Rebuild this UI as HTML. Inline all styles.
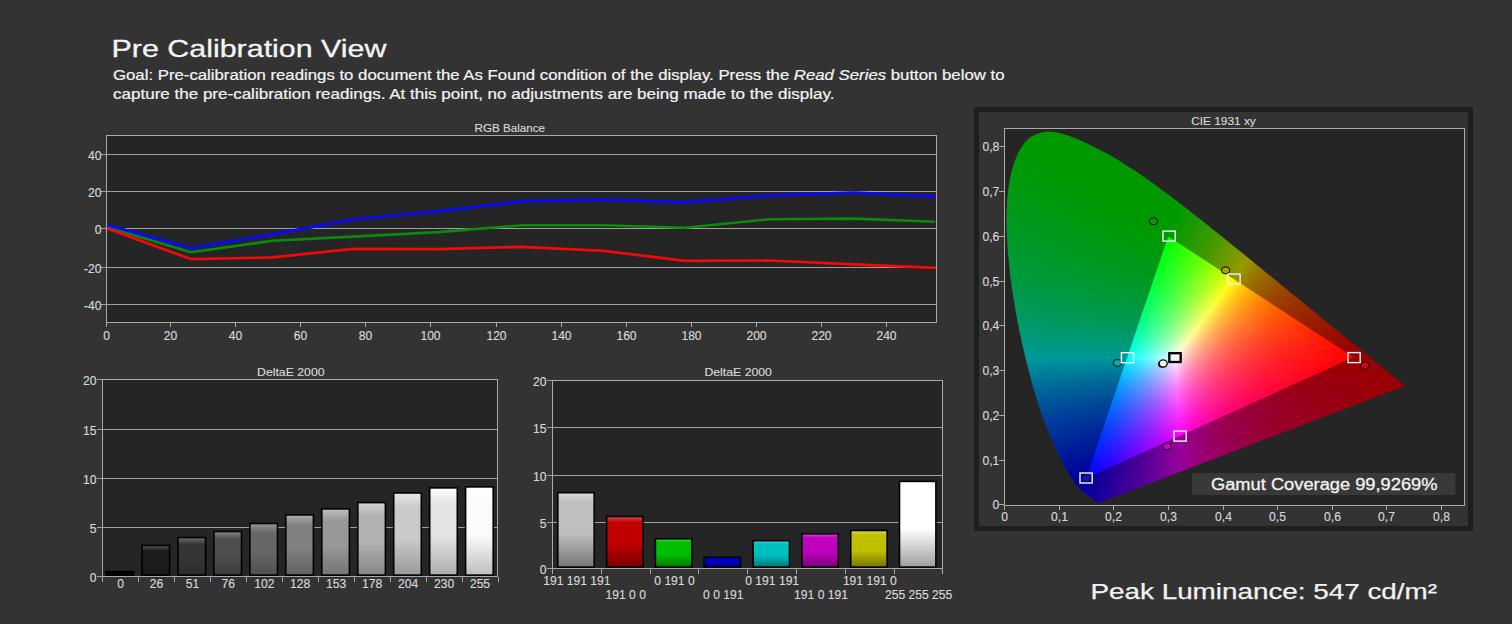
<!DOCTYPE html>
<html><head><meta charset="utf-8"><style>
html,body{margin:0;padding:0;background:#333333;width:1512px;height:624px;overflow:hidden;}
svg text{font-family:"Liberation Sans", sans-serif;}
.ax{font-size:12.1px;fill:#d8d8d8;stroke:#d8d8d8;stroke-width:0.15px;}
.tt{font-size:11.3px;fill:#d8d8d8;stroke:#d8d8d8;stroke-width:0.15px;}
.gam{font-size:15.8px;fill:#f2f2f2;stroke:#f2f2f2;stroke-width:0.3px;}
.title{font-size:24.8px;fill:#f4f4f4;stroke:#f4f4f4;stroke-width:0.3px;}
.goal{font-size:14.5px;fill:#f2f2f2;stroke:#f2f2f2;stroke-width:0.22px;}
.peak{font-size:22px;fill:#f2f2f2;stroke:#f2f2f2;stroke-width:0.25px;}
</style></head><body>
<svg width="1512" height="624" style="position:absolute;left:0;top:0"><defs><linearGradient id="gg0" x1="0" y1="0" x2="0" y2="1"><stop offset="0" stop-color="#464646"/><stop offset="0.18" stop-color="#040404"/><stop offset="0.55" stop-color="#040404"/><stop offset="1" stop-color="#060606"/></linearGradient><linearGradient id="gg1" x1="0" y1="0" x2="0" y2="1"><stop offset="0" stop-color="#5b5b5b"/><stop offset="0.18" stop-color="#1d1d1d"/><stop offset="0.55" stop-color="#1d1d1d"/><stop offset="1" stop-color="#191919"/></linearGradient><linearGradient id="gg2" x1="0" y1="0" x2="0" y2="1"><stop offset="0" stop-color="#6f6f6f"/><stop offset="0.18" stop-color="#353535"/><stop offset="0.55" stop-color="#353535"/><stop offset="1" stop-color="#2b2b2b"/></linearGradient><linearGradient id="gg3" x1="0" y1="0" x2="0" y2="1"><stop offset="0" stop-color="#838383"/><stop offset="0.18" stop-color="#4e4e4e"/><stop offset="0.55" stop-color="#4e4e4e"/><stop offset="1" stop-color="#3d3d3d"/></linearGradient><linearGradient id="gg4" x1="0" y1="0" x2="0" y2="1"><stop offset="0" stop-color="#989898"/><stop offset="0.18" stop-color="#676767"/><stop offset="0.55" stop-color="#676767"/><stop offset="1" stop-color="#4f4f4f"/></linearGradient><linearGradient id="gg5" x1="0" y1="0" x2="0" y2="1"><stop offset="0" stop-color="#acacac"/><stop offset="0.18" stop-color="#808080"/><stop offset="0.55" stop-color="#808080"/><stop offset="1" stop-color="#626262"/></linearGradient><linearGradient id="gg6" x1="0" y1="0" x2="0" y2="1"><stop offset="0" stop-color="#c0c0c0"/><stop offset="0.18" stop-color="#989898"/><stop offset="0.55" stop-color="#989898"/><stop offset="1" stop-color="#747474"/></linearGradient><linearGradient id="gg7" x1="0" y1="0" x2="0" y2="1"><stop offset="0" stop-color="#d4d4d4"/><stop offset="0.18" stop-color="#b1b1b1"/><stop offset="0.55" stop-color="#b1b1b1"/><stop offset="1" stop-color="#868686"/></linearGradient><linearGradient id="gg8" x1="0" y1="0" x2="0" y2="1"><stop offset="0" stop-color="#e9e9e9"/><stop offset="0.18" stop-color="#cacaca"/><stop offset="0.55" stop-color="#cacaca"/><stop offset="1" stop-color="#999999"/></linearGradient><linearGradient id="gg9" x1="0" y1="0" x2="0" y2="1"><stop offset="0" stop-color="#fefefe"/><stop offset="0.18" stop-color="#e3e3e3"/><stop offset="0.55" stop-color="#e3e3e3"/><stop offset="1" stop-color="#acacac"/></linearGradient><linearGradient id="gg10" x1="0" y1="0" x2="0" y2="1"><stop offset="0" stop-color="#ffffff"/><stop offset="0.18" stop-color="#fbfbfb"/><stop offset="0.55" stop-color="#fbfbfb"/><stop offset="1" stop-color="#bebebe"/></linearGradient><linearGradient id="cg0" x1="0" y1="0" x2="0" y2="1"><stop offset="0" stop-color="#dedede"/><stop offset="0.12" stop-color="#bfbfbf"/><stop offset="0.55" stop-color="#bfbfbf"/><stop offset="1" stop-color="#767676"/></linearGradient><linearGradient id="cg1" x1="0" y1="0" x2="0" y2="1"><stop offset="0" stop-color="#de4646"/><stop offset="0.12" stop-color="#bf0000"/><stop offset="0.55" stop-color="#bf0000"/><stop offset="1" stop-color="#760000"/></linearGradient><linearGradient id="cg2" x1="0" y1="0" x2="0" y2="1"><stop offset="0" stop-color="#46de46"/><stop offset="0.12" stop-color="#00bf00"/><stop offset="0.55" stop-color="#00bf00"/><stop offset="1" stop-color="#007600"/></linearGradient><linearGradient id="cg3" x1="0" y1="0" x2="0" y2="1"><stop offset="0" stop-color="#4646de"/><stop offset="0.12" stop-color="#0000bf"/><stop offset="0.55" stop-color="#0000bf"/><stop offset="1" stop-color="#000076"/></linearGradient><linearGradient id="cg4" x1="0" y1="0" x2="0" y2="1"><stop offset="0" stop-color="#46dede"/><stop offset="0.12" stop-color="#00bfbf"/><stop offset="0.55" stop-color="#00bfbf"/><stop offset="1" stop-color="#007676"/></linearGradient><linearGradient id="cg5" x1="0" y1="0" x2="0" y2="1"><stop offset="0" stop-color="#de46de"/><stop offset="0.12" stop-color="#bf00bf"/><stop offset="0.55" stop-color="#bf00bf"/><stop offset="1" stop-color="#760076"/></linearGradient><linearGradient id="cg6" x1="0" y1="0" x2="0" y2="1"><stop offset="0" stop-color="#dede46"/><stop offset="0.12" stop-color="#bfbf00"/><stop offset="0.55" stop-color="#bfbf00"/><stop offset="1" stop-color="#767600"/></linearGradient><linearGradient id="cg7" x1="0" y1="0" x2="0" y2="1"><stop offset="0" stop-color="#ffffff"/><stop offset="0.12" stop-color="#ffffff"/><stop offset="0.55" stop-color="#ffffff"/><stop offset="1" stop-color="#9e9e9e"/></linearGradient></defs><rect x="106" y="135" width="831" height="188" fill="#252525"/><rect x="106" y="135" width="831" height="1" fill="#aaaaaa"/><rect x="106" y="322" width="831" height="1" fill="#aaaaaa"/><rect x="106" y="135" width="1" height="188" fill="#aaaaaa"/><rect x="936" y="135" width="1" height="188" fill="#aaaaaa"/><rect x="101" y="154" width="835" height="1" fill="#a0a0a0"/><text x="101.5" y="159.8" class="ax" text-anchor="end">40</text><rect x="101" y="191" width="835" height="1" fill="#a0a0a0"/><text x="101.5" y="196.8" class="ax" text-anchor="end">20</text><rect x="101" y="228" width="835" height="1" fill="#a0a0a0"/><text x="101.5" y="233.8" class="ax" text-anchor="end">0</text><rect x="101" y="267" width="835" height="1" fill="#a0a0a0"/><text x="101.5" y="272.8" class="ax" text-anchor="end">-20</text><rect x="101" y="304" width="835" height="1" fill="#a0a0a0"/><text x="101.5" y="309.8" class="ax" text-anchor="end">-40</text><rect x="106" y="323" width="1" height="4" fill="#aaaaaa"/><text x="106.5" y="339.6" class="ax" text-anchor="middle">0</text><rect x="170" y="323" width="1" height="4" fill="#aaaaaa"/><text x="170.5" y="339.6" class="ax" text-anchor="middle">20</text><rect x="235" y="323" width="1" height="4" fill="#aaaaaa"/><text x="235.5" y="339.6" class="ax" text-anchor="middle">40</text><rect x="300" y="323" width="1" height="4" fill="#aaaaaa"/><text x="300.5" y="339.6" class="ax" text-anchor="middle">60</text><rect x="365" y="323" width="1" height="4" fill="#aaaaaa"/><text x="365.5" y="339.6" class="ax" text-anchor="middle">80</text><rect x="430" y="323" width="1" height="4" fill="#aaaaaa"/><text x="430.5" y="339.6" class="ax" text-anchor="middle">100</text><rect x="496" y="323" width="1" height="4" fill="#aaaaaa"/><text x="496.5" y="339.6" class="ax" text-anchor="middle">120</text><rect x="561" y="323" width="1" height="4" fill="#aaaaaa"/><text x="561.5" y="339.6" class="ax" text-anchor="middle">140</text><rect x="626" y="323" width="1" height="4" fill="#aaaaaa"/><text x="626.5" y="339.6" class="ax" text-anchor="middle">160</text><rect x="691" y="323" width="1" height="4" fill="#aaaaaa"/><text x="691.5" y="339.6" class="ax" text-anchor="middle">180</text><rect x="756" y="323" width="1" height="4" fill="#aaaaaa"/><text x="756.5" y="339.6" class="ax" text-anchor="middle">200</text><rect x="821" y="323" width="1" height="4" fill="#aaaaaa"/><text x="821.5" y="339.6" class="ax" text-anchor="middle">220</text><rect x="886" y="323" width="1" height="4" fill="#aaaaaa"/><text x="886.5" y="339.6" class="ax" text-anchor="middle">240</text><text x="509.8" y="131.7" class="tt" text-anchor="middle" textLength="70.5" lengthAdjust="spacingAndGlyphs">RGB Balance</text><svg x="107" y="136" width="829" height="186" overflow="hidden"><g transform="translate(-107 -136)"><polyline points="106.5,226.9 191.0,252.2 272.2,240.8 353.5,236.6 438.0,232.1 522.5,225.3 603.8,225.3 685.0,227.7 769.5,219.2 854.0,218.6 935.2,221.7" fill="none" stroke="#0b8a0b" stroke-width="2.6" stroke-linejoin="round"/><polyline points="106.5,228.3 191.0,259.1 272.2,257.4 353.5,248.8 438.0,249.1 522.5,246.8 603.8,250.9 685.0,260.8 769.5,260.5 854.0,264.3 935.2,267.8" fill="none" stroke="#f20a0a" stroke-width="2.7" stroke-linejoin="round"/><polyline points="106.5,224.9 191.0,248.0 272.2,234.5 353.5,219.4 438.0,211.3 522.5,201.2 603.8,199.5 685.0,202.2 769.5,195.5 854.0,192.6 935.2,196.5" fill="none" stroke="#0a0af5" stroke-width="2.9" stroke-linejoin="round"/></g></svg><rect x="102" y="379" width="396" height="198" fill="#252525"/><rect x="102" y="379" width="396" height="1" fill="#aaaaaa"/><rect x="102" y="576" width="396" height="1" fill="#aaaaaa"/><rect x="102" y="379" width="1" height="198" fill="#aaaaaa"/><rect x="497" y="379" width="1" height="198" fill="#aaaaaa"/><rect x="97" y="379" width="5" height="1" fill="#a0a0a0"/><text x="96.5" y="384.6" class="ax" text-anchor="end">20</text><rect x="97" y="429" width="400" height="1" fill="#a0a0a0"/><text x="96.5" y="434.6" class="ax" text-anchor="end">15</text><rect x="97" y="478" width="400" height="1" fill="#a0a0a0"/><text x="96.5" y="483.6" class="ax" text-anchor="end">10</text><rect x="97" y="527" width="400" height="1" fill="#a0a0a0"/><text x="96.5" y="532.6" class="ax" text-anchor="end">5</text><rect x="97" y="576" width="5" height="1" fill="#a0a0a0"/><text x="96.5" y="581.6" class="ax" text-anchor="end">0</text><rect x="102" y="577" width="1" height="5" fill="#aaaaaa"/><rect x="138" y="577" width="1" height="5" fill="#aaaaaa"/><rect x="174" y="577" width="1" height="5" fill="#aaaaaa"/><rect x="210" y="577" width="1" height="5" fill="#aaaaaa"/><rect x="246" y="577" width="1" height="5" fill="#aaaaaa"/><rect x="282" y="577" width="1" height="5" fill="#aaaaaa"/><rect x="318" y="577" width="1" height="5" fill="#aaaaaa"/><rect x="354" y="577" width="1" height="5" fill="#aaaaaa"/><rect x="390" y="577" width="1" height="5" fill="#aaaaaa"/><rect x="426" y="577" width="1" height="5" fill="#aaaaaa"/><rect x="462" y="577" width="1" height="5" fill="#aaaaaa"/><rect x="498" y="577" width="1" height="5" fill="#aaaaaa"/><rect x="106.1" y="571.6" width="27.6" height="3.5" fill="url(#gg0)" stroke="#000" stroke-width="1.6"/><text x="120.5" y="588" class="ax" text-anchor="middle">0</text><rect x="142.0" y="545.5" width="27.6" height="29.6" fill="url(#gg1)" stroke="#000" stroke-width="1.6"/><text x="156.4" y="588" class="ax" text-anchor="middle">26</text><rect x="178.0" y="537.5" width="27.6" height="37.6" fill="url(#gg2)" stroke="#000" stroke-width="1.6"/><text x="192.4" y="588" class="ax" text-anchor="middle">51</text><rect x="213.9" y="531.5" width="27.6" height="43.6" fill="url(#gg3)" stroke="#000" stroke-width="1.6"/><text x="228.3" y="588" class="ax" text-anchor="middle">76</text><rect x="249.9" y="523.5" width="27.6" height="51.6" fill="url(#gg4)" stroke="#000" stroke-width="1.6"/><text x="264.3" y="588" class="ax" text-anchor="middle">102</text><rect x="285.8" y="514.9" width="27.6" height="60.2" fill="url(#gg5)" stroke="#000" stroke-width="1.6"/><text x="300.2" y="588" class="ax" text-anchor="middle">128</text><rect x="321.8" y="508.9" width="27.6" height="66.2" fill="url(#gg6)" stroke="#000" stroke-width="1.6"/><text x="336.2" y="588" class="ax" text-anchor="middle">153</text><rect x="357.8" y="502.6" width="27.6" height="72.5" fill="url(#gg7)" stroke="#000" stroke-width="1.6"/><text x="372.2" y="588" class="ax" text-anchor="middle">178</text><rect x="393.7" y="493.0" width="27.6" height="82.1" fill="url(#gg8)" stroke="#000" stroke-width="1.6"/><text x="408.1" y="588" class="ax" text-anchor="middle">204</text><rect x="429.7" y="487.9" width="27.6" height="87.2" fill="url(#gg9)" stroke="#000" stroke-width="1.6"/><text x="444.1" y="588" class="ax" text-anchor="middle">230</text><rect x="465.6" y="486.9" width="27.6" height="88.2" fill="url(#gg10)" stroke="#000" stroke-width="1.6"/><text x="480.0" y="588" class="ax" text-anchor="middle">255</text><text x="290.8" y="375.9" class="tt" text-anchor="middle" textLength="67.5" lengthAdjust="spacingAndGlyphs">DeltaE 2000</text><rect x="552" y="380" width="391" height="189" fill="#252525"/><rect x="552" y="380" width="391" height="1" fill="#aaaaaa"/><rect x="552" y="568" width="391" height="1" fill="#aaaaaa"/><rect x="552" y="380" width="1" height="189" fill="#aaaaaa"/><rect x="942" y="380" width="1" height="189" fill="#aaaaaa"/><rect x="547" y="380" width="5" height="1" fill="#a0a0a0"/><text x="546.5" y="385.6" class="ax" text-anchor="end">20</text><rect x="547" y="427" width="395" height="1" fill="#a0a0a0"/><text x="546.5" y="432.6" class="ax" text-anchor="end">15</text><rect x="547" y="475" width="395" height="1" fill="#a0a0a0"/><text x="546.5" y="480.6" class="ax" text-anchor="end">10</text><rect x="547" y="522" width="395" height="1" fill="#a0a0a0"/><text x="546.5" y="527.6" class="ax" text-anchor="end">5</text><rect x="547" y="568" width="5" height="1" fill="#a0a0a0"/><text x="546.5" y="573.6" class="ax" text-anchor="end">0</text><rect x="552" y="569" width="1" height="5" fill="#aaaaaa"/><rect x="601" y="569" width="1" height="5" fill="#aaaaaa"/><rect x="650" y="569" width="1" height="5" fill="#aaaaaa"/><rect x="698" y="569" width="1" height="5" fill="#aaaaaa"/><rect x="747" y="569" width="1" height="5" fill="#aaaaaa"/><rect x="796" y="569" width="1" height="5" fill="#aaaaaa"/><rect x="845" y="569" width="1" height="5" fill="#aaaaaa"/><rect x="894" y="569" width="1" height="5" fill="#aaaaaa"/><rect x="942" y="569" width="1" height="5" fill="#aaaaaa"/><rect x="557.8" y="492.7" width="36.4" height="74.4" fill="url(#cg0)" stroke="#000" stroke-width="1.6"/><text x="576.9" y="585" class="ax" text-anchor="middle">191 191 191</text><rect x="606.6" y="516.5" width="36.4" height="50.6" fill="url(#cg1)" stroke="#000" stroke-width="1.6"/><text x="625.7" y="599" class="ax" text-anchor="middle">191 0 0</text><rect x="655.4" y="538.8" width="36.4" height="28.3" fill="url(#cg2)" stroke="#000" stroke-width="1.6"/><text x="674.5" y="585" class="ax" text-anchor="middle">0 191 0</text><rect x="704.2" y="557.2" width="36.4" height="9.9" fill="url(#cg3)" stroke="#000" stroke-width="1.6"/><text x="723.3" y="599" class="ax" text-anchor="middle">0 0 191</text><rect x="753.1" y="540.7" width="36.4" height="26.4" fill="url(#cg4)" stroke="#000" stroke-width="1.6"/><text x="772.2" y="585" class="ax" text-anchor="middle">0 191 191</text><rect x="801.9" y="533.8" width="36.4" height="33.3" fill="url(#cg5)" stroke="#000" stroke-width="1.6"/><text x="821.0" y="599" class="ax" text-anchor="middle">191 0 191</text><rect x="850.7" y="530.5" width="36.4" height="36.6" fill="url(#cg6)" stroke="#000" stroke-width="1.6"/><text x="869.8" y="585" class="ax" text-anchor="middle">191 191 0</text><rect x="899.5" y="481.4" width="36.4" height="85.7" fill="url(#cg7)" stroke="#000" stroke-width="1.6"/><text x="918.6" y="599" class="ax" text-anchor="middle">255 255 255</text><text x="738.2" y="375.9" class="tt" text-anchor="middle" textLength="67.5" lengthAdjust="spacingAndGlyphs">DeltaE 2000</text><rect x="976.5" y="109.5" width="494" height="419" fill="#333333" stroke="#1e1e1e" stroke-width="5"/><rect x="1004" y="128" width="461" height="378" fill="#252525"/><rect x="1004" y="128" width="461" height="1" fill="#aaaaaa"/><rect x="1004" y="505" width="461" height="1" fill="#aaaaaa"/><rect x="1004" y="128" width="1" height="378" fill="#aaaaaa"/><rect x="1464" y="128" width="1" height="378" fill="#aaaaaa"/><defs><linearGradient id="c0" x1="0" x2="1" y1="0" y2="0"><stop offset="0.022" stop-color="#009900"/><stop offset="0.978" stop-color="#009900"/></linearGradient><linearGradient id="c1" x1="0" x2="1" y1="0" y2="0"><stop offset="0.014" stop-color="#009900"/><stop offset="0.986" stop-color="#009900"/></linearGradient><linearGradient id="c2" x1="0" x2="1" y1="0" y2="0"><stop offset="0.011" stop-color="#009900"/><stop offset="0.989" stop-color="#009900"/></linearGradient><linearGradient id="c3" x1="0" x2="1" y1="0" y2="0"><stop offset="0.009" stop-color="#009900"/><stop offset="0.991" stop-color="#009900"/></linearGradient><linearGradient id="c4" x1="0" x2="1" y1="0" y2="0"><stop offset="0.008" stop-color="#009900"/><stop offset="0.992" stop-color="#009900"/></linearGradient><linearGradient id="c5" x1="0" x2="1" y1="0" y2="0"><stop offset="0.008" stop-color="#009900"/><stop offset="0.992" stop-color="#009900"/></linearGradient><linearGradient id="c6" x1="0" x2="1" y1="0" y2="0"><stop offset="0.007" stop-color="#009901"/><stop offset="0.993" stop-color="#009900"/></linearGradient><linearGradient id="c7" x1="0" x2="1" y1="0" y2="0"><stop offset="0.006" stop-color="#009902"/><stop offset="0.994" stop-color="#009900"/></linearGradient><linearGradient id="c8" x1="0" x2="1" y1="0" y2="0"><stop offset="0.006" stop-color="#009902"/><stop offset="0.994" stop-color="#009900"/></linearGradient><linearGradient id="c9" x1="0" x2="1" y1="0" y2="0"><stop offset="0.006" stop-color="#009903"/><stop offset="0.994" stop-color="#009900"/></linearGradient><linearGradient id="c10" x1="0" x2="1" y1="0" y2="0"><stop offset="0.005" stop-color="#009904"/><stop offset="0.995" stop-color="#009900"/></linearGradient><linearGradient id="c11" x1="0" x2="1" y1="0" y2="0"><stop offset="0.005" stop-color="#009905"/><stop offset="0.266" stop-color="#009900"/><stop offset="0.995" stop-color="#009900"/></linearGradient><linearGradient id="c12" x1="0" x2="1" y1="0" y2="0"><stop offset="0.005" stop-color="#009906"/><stop offset="0.295" stop-color="#009900"/><stop offset="0.995" stop-color="#009900"/></linearGradient><linearGradient id="c13" x1="0" x2="1" y1="0" y2="0"><stop offset="0.005" stop-color="#009906"/><stop offset="0.319" stop-color="#009900"/><stop offset="0.995" stop-color="#009900"/></linearGradient><linearGradient id="c14" x1="0" x2="1" y1="0" y2="0"><stop offset="0.005" stop-color="#009907"/><stop offset="0.353" stop-color="#009900"/><stop offset="0.995" stop-color="#009900"/></linearGradient><linearGradient id="c15" x1="0" x2="1" y1="0" y2="0"><stop offset="0.004" stop-color="#009908"/><stop offset="0.371" stop-color="#009900"/><stop offset="0.996" stop-color="#009900"/></linearGradient><linearGradient id="c16" x1="0" x2="1" y1="0" y2="0"><stop offset="0.004" stop-color="#009909"/><stop offset="0.389" stop-color="#009900"/><stop offset="0.996" stop-color="#009900"/></linearGradient><linearGradient id="c17" x1="0" x2="1" y1="0" y2="0"><stop offset="0.004" stop-color="#00990a"/><stop offset="0.409" stop-color="#009900"/><stop offset="0.996" stop-color="#009900"/></linearGradient><linearGradient id="c18" x1="0" x2="1" y1="0" y2="0"><stop offset="0.004" stop-color="#00990a"/><stop offset="0.423" stop-color="#009900"/><stop offset="0.996" stop-color="#009900"/></linearGradient><linearGradient id="c19" x1="0" x2="1" y1="0" y2="0"><stop offset="0.004" stop-color="#00990b"/><stop offset="0.441" stop-color="#009900"/><stop offset="0.996" stop-color="#009900"/></linearGradient><linearGradient id="c20" x1="0" x2="1" y1="0" y2="0"><stop offset="0.004" stop-color="#00990c"/><stop offset="0.454" stop-color="#009900"/><stop offset="0.996" stop-color="#009900"/></linearGradient><linearGradient id="c21" x1="0" x2="1" y1="0" y2="0"><stop offset="0.004" stop-color="#00990d"/><stop offset="0.470" stop-color="#009900"/><stop offset="0.996" stop-color="#009900"/></linearGradient><linearGradient id="c22" x1="0" x2="1" y1="0" y2="0"><stop offset="0.004" stop-color="#00990d"/><stop offset="0.482" stop-color="#009900"/><stop offset="0.996" stop-color="#009900"/></linearGradient><linearGradient id="c23" x1="0" x2="1" y1="0" y2="0"><stop offset="0.004" stop-color="#00990e"/><stop offset="0.500" stop-color="#009900"/><stop offset="0.996" stop-color="#009900"/></linearGradient><linearGradient id="c24" x1="0" x2="1" y1="0" y2="0"><stop offset="0.003" stop-color="#00990f"/><stop offset="0.510" stop-color="#009900"/><stop offset="0.997" stop-color="#009900"/></linearGradient><linearGradient id="c25" x1="0" x2="1" y1="0" y2="0"><stop offset="0.003" stop-color="#009910"/><stop offset="0.520" stop-color="#009900"/><stop offset="0.997" stop-color="#009900"/></linearGradient><linearGradient id="c26" x1="0" x2="1" y1="0" y2="0"><stop offset="0.003" stop-color="#009911"/><stop offset="0.533" stop-color="#009900"/><stop offset="0.997" stop-color="#009900"/></linearGradient><linearGradient id="c27" x1="0" x2="1" y1="0" y2="0"><stop offset="0.003" stop-color="#009911"/><stop offset="0.542" stop-color="#009900"/><stop offset="0.997" stop-color="#009900"/></linearGradient><linearGradient id="c28" x1="0" x2="1" y1="0" y2="0"><stop offset="0.003" stop-color="#009912"/><stop offset="0.554" stop-color="#009900"/><stop offset="0.997" stop-color="#009900"/></linearGradient><linearGradient id="c29" x1="0" x2="1" y1="0" y2="0"><stop offset="0.003" stop-color="#009913"/><stop offset="0.563" stop-color="#009900"/><stop offset="0.997" stop-color="#009900"/></linearGradient><linearGradient id="c30" x1="0" x2="1" y1="0" y2="0"><stop offset="0.003" stop-color="#009914"/><stop offset="0.574" stop-color="#009900"/><stop offset="0.997" stop-color="#009900"/></linearGradient><linearGradient id="c31" x1="0" x2="1" y1="0" y2="0"><stop offset="0.003" stop-color="#009915"/><stop offset="0.591" stop-color="#009900"/><stop offset="0.997" stop-color="#009900"/></linearGradient><linearGradient id="c32" x1="0" x2="1" y1="0" y2="0"><stop offset="0.003" stop-color="#009915"/><stop offset="0.598" stop-color="#009900"/><stop offset="0.997" stop-color="#009900"/></linearGradient><linearGradient id="c33" x1="0" x2="1" y1="0" y2="0"><stop offset="0.003" stop-color="#009916"/><stop offset="0.605" stop-color="#009900"/><stop offset="0.997" stop-color="#009900"/></linearGradient><linearGradient id="c34" x1="0" x2="1" y1="0" y2="0"><stop offset="0.003" stop-color="#009917"/><stop offset="0.616" stop-color="#009900"/><stop offset="0.997" stop-color="#009900"/></linearGradient><linearGradient id="c35" x1="0" x2="1" y1="0" y2="0"><stop offset="0.003" stop-color="#009918"/><stop offset="0.622" stop-color="#009900"/><stop offset="0.997" stop-color="#029900"/></linearGradient><linearGradient id="c36" x1="0" x2="1" y1="0" y2="0"><stop offset="0.003" stop-color="#009919"/><stop offset="0.634" stop-color="#009900"/><stop offset="0.969" stop-color="#009900"/><stop offset="0.997" stop-color="#059900"/></linearGradient><linearGradient id="c37" x1="0" x2="1" y1="0" y2="0"><stop offset="0.003" stop-color="#00991a"/><stop offset="0.640" stop-color="#009900"/><stop offset="0.953" stop-color="#009900"/><stop offset="0.997" stop-color="#099900"/></linearGradient><linearGradient id="c38" x1="0" x2="1" y1="0" y2="0"><stop offset="0.003" stop-color="#00991b"/><stop offset="0.646" stop-color="#009900"/><stop offset="0.932" stop-color="#009900"/><stop offset="0.997" stop-color="#0d9900"/></linearGradient><linearGradient id="c39" x1="0" x2="1" y1="0" y2="0"><stop offset="0.003" stop-color="#00991b"/><stop offset="0.655" stop-color="#009900"/><stop offset="0.917" stop-color="#009900"/><stop offset="0.997" stop-color="#119900"/></linearGradient><linearGradient id="c40" x1="0" x2="1" y1="0" y2="0"><stop offset="0.003" stop-color="#00991c"/><stop offset="0.661" stop-color="#009900"/><stop offset="0.903" stop-color="#009900"/><stop offset="0.997" stop-color="#159900"/></linearGradient><linearGradient id="c41" x1="0" x2="1" y1="0" y2="0"><stop offset="0.003" stop-color="#00991d"/><stop offset="0.669" stop-color="#009900"/><stop offset="0.888" stop-color="#009900"/><stop offset="0.997" stop-color="#199900"/></linearGradient><linearGradient id="c42" x1="0" x2="1" y1="0" y2="0"><stop offset="0.003" stop-color="#00991e"/><stop offset="0.674" stop-color="#009900"/><stop offset="0.869" stop-color="#009900"/><stop offset="0.997" stop-color="#1e9900"/></linearGradient><linearGradient id="c43" x1="0" x2="1" y1="0" y2="0"><stop offset="0.003" stop-color="#00991f"/><stop offset="0.683" stop-color="#009900"/><stop offset="0.860" stop-color="#009900"/><stop offset="0.997" stop-color="#219900"/></linearGradient><linearGradient id="c44" x1="0" x2="1" y1="0" y2="0"><stop offset="0.003" stop-color="#009920"/><stop offset="0.688" stop-color="#009900"/><stop offset="0.843" stop-color="#009900"/><stop offset="0.998" stop-color="#269900"/></linearGradient><linearGradient id="c45" x1="0" x2="1" y1="0" y2="0"><stop offset="0.002" stop-color="#009921"/><stop offset="0.696" stop-color="#009900"/><stop offset="0.829" stop-color="#009900"/><stop offset="0.998" stop-color="#2a9900"/></linearGradient><linearGradient id="c46" x1="0" x2="1" y1="0" y2="0"><stop offset="0.002" stop-color="#009922"/><stop offset="0.700" stop-color="#009900"/><stop offset="0.817" stop-color="#009900"/><stop offset="0.998" stop-color="#309900"/></linearGradient><linearGradient id="c47" x1="0" x2="1" y1="0" y2="0"><stop offset="0.002" stop-color="#009923"/><stop offset="0.708" stop-color="#009900"/><stop offset="0.804" stop-color="#009900"/><stop offset="0.998" stop-color="#349900"/></linearGradient><linearGradient id="c48" x1="0" x2="1" y1="0" y2="0"><stop offset="0.002" stop-color="#009924"/><stop offset="0.788" stop-color="#009900"/><stop offset="0.998" stop-color="#3a9900"/></linearGradient><linearGradient id="c49" x1="0" x2="1" y1="0" y2="0"><stop offset="0.002" stop-color="#009925"/><stop offset="0.781" stop-color="#009900"/><stop offset="0.998" stop-color="#3e9900"/></linearGradient><linearGradient id="c50" x1="0" x2="1" y1="0" y2="0"><stop offset="0.002" stop-color="#009926"/><stop offset="0.765" stop-color="#009900"/><stop offset="0.998" stop-color="#459900"/></linearGradient><linearGradient id="c51" x1="0" x2="1" y1="0" y2="0"><stop offset="0.002" stop-color="#009927"/><stop offset="0.753" stop-color="#009900"/><stop offset="0.998" stop-color="#499900"/></linearGradient><linearGradient id="c52" x1="0" x2="1" y1="0" y2="0"><stop offset="0.002" stop-color="#009928"/><stop offset="0.743" stop-color="#009900"/><stop offset="0.998" stop-color="#509900"/></linearGradient><linearGradient id="c53" x1="0" x2="1" y1="0" y2="0"><stop offset="0.083" stop-color="#00ff01"/><stop offset="0.917" stop-color="#07ff00"/></linearGradient><linearGradient id="c54" x1="0" x2="1" y1="0" y2="0"><stop offset="0.002" stop-color="#009929"/><stop offset="0.732" stop-color="#009901"/><stop offset="0.998" stop-color="#559900"/></linearGradient><linearGradient id="c55" x1="0" x2="1" y1="0" y2="0"><stop offset="0.056" stop-color="#00ff02"/><stop offset="0.944" stop-color="#0fff00"/></linearGradient><linearGradient id="c56" x1="0" x2="1" y1="0" y2="0"><stop offset="0.002" stop-color="#00992a"/><stop offset="0.717" stop-color="#009902"/><stop offset="0.855" stop-color="#2a9900"/><stop offset="0.998" stop-color="#5c9900"/></linearGradient><linearGradient id="c57" x1="0" x2="1" y1="0" y2="0"><stop offset="0.038" stop-color="#00ff05"/><stop offset="0.962" stop-color="#17ff00"/></linearGradient><linearGradient id="c58" x1="0" x2="1" y1="0" y2="0"><stop offset="0.002" stop-color="#00992b"/><stop offset="0.710" stop-color="#009904"/><stop offset="0.861" stop-color="#2f9900"/><stop offset="0.998" stop-color="#629900"/></linearGradient><linearGradient id="c59" x1="0" x2="1" y1="0" y2="0"><stop offset="0.029" stop-color="#00ff07"/><stop offset="0.971" stop-color="#1fff00"/></linearGradient><linearGradient id="c60" x1="0" x2="1" y1="0" y2="0"><stop offset="0.002" stop-color="#00992c"/><stop offset="0.697" stop-color="#009905"/><stop offset="0.854" stop-color="#329900"/><stop offset="0.998" stop-color="#699900"/></linearGradient><linearGradient id="c61" x1="0" x2="1" y1="0" y2="0"><stop offset="0.025" stop-color="#00ff09"/><stop offset="0.975" stop-color="#28ff00"/></linearGradient><linearGradient id="c62" x1="0" x2="1" y1="0" y2="0"><stop offset="0.002" stop-color="#00992d"/><stop offset="0.686" stop-color="#009906"/><stop offset="0.846" stop-color="#349900"/><stop offset="0.998" stop-color="#6f9900"/></linearGradient><linearGradient id="c63" x1="0" x2="1" y1="0" y2="0"><stop offset="0.021" stop-color="#00ff0b"/><stop offset="0.979" stop-color="#31ff00"/></linearGradient><linearGradient id="c64" x1="0" x2="1" y1="0" y2="0"><stop offset="0.002" stop-color="#00992e"/><stop offset="0.677" stop-color="#009908"/><stop offset="0.844" stop-color="#399900"/><stop offset="0.998" stop-color="#789900"/></linearGradient><linearGradient id="c65" x1="0" x2="1" y1="0" y2="0"><stop offset="0.018" stop-color="#00ff0e"/><stop offset="0.089" stop-color="#01ff0d"/><stop offset="0.982" stop-color="#3bff00"/></linearGradient><linearGradient id="c66" x1="0" x2="1" y1="0" y2="0"><stop offset="0.002" stop-color="#00992f"/><stop offset="0.667" stop-color="#009909"/><stop offset="0.841" stop-color="#3c9900"/><stop offset="0.998" stop-color="#7e9900"/></linearGradient><linearGradient id="c67" x1="0" x2="1" y1="0" y2="0"><stop offset="0.016" stop-color="#00ff10"/><stop offset="0.984" stop-color="#44ff00"/></linearGradient><linearGradient id="c68" x1="0" x2="1" y1="0" y2="0"><stop offset="0.002" stop-color="#009930"/><stop offset="0.655" stop-color="#00990b"/><stop offset="0.831" stop-color="#3e9900"/><stop offset="0.998" stop-color="#879900"/></linearGradient><linearGradient id="c69" x1="0" x2="1" y1="0" y2="0"><stop offset="0.014" stop-color="#00ff12"/><stop offset="0.271" stop-color="#11ff0d"/><stop offset="0.986" stop-color="#4fff00"/></linearGradient><linearGradient id="c70" x1="0" x2="1" y1="0" y2="0"><stop offset="0.002" stop-color="#009932"/><stop offset="0.649" stop-color="#00990c"/><stop offset="0.832" stop-color="#439900"/><stop offset="0.998" stop-color="#8e9900"/></linearGradient><linearGradient id="c71" x1="0" x2="1" y1="0" y2="0"><stop offset="0.013" stop-color="#00ff15"/><stop offset="0.295" stop-color="#15ff0f"/><stop offset="0.987" stop-color="#59ff00"/></linearGradient><linearGradient id="c72" x1="0" x2="1" y1="0" y2="0"><stop offset="0.002" stop-color="#009933"/><stop offset="0.636" stop-color="#00990d"/><stop offset="0.829" stop-color="#489900"/><stop offset="0.998" stop-color="#989900"/></linearGradient><linearGradient id="c73" x1="0" x2="1" y1="0" y2="0"><stop offset="0.012" stop-color="#00ff17"/><stop offset="0.393" stop-color="#23ff0e"/><stop offset="0.988" stop-color="#64ff00"/></linearGradient><linearGradient id="c74" x1="0" x2="1" y1="0" y2="0"><stop offset="0.002" stop-color="#009934"/><stop offset="0.627" stop-color="#00990f"/><stop offset="0.794" stop-color="#3e9900"/><stop offset="0.986" stop-color="#999900"/><stop offset="0.998" stop-color="#999300"/></linearGradient><linearGradient id="c75" x1="0" x2="1" y1="0" y2="0"><stop offset="0.011" stop-color="#00ff1a"/><stop offset="0.402" stop-color="#28ff0f"/><stop offset="0.989" stop-color="#70ff00"/></linearGradient><linearGradient id="c76" x1="0" x2="1" y1="0" y2="0"><stop offset="0.002" stop-color="#009935"/><stop offset="0.619" stop-color="#009910"/><stop offset="0.804" stop-color="#489900"/><stop offset="0.966" stop-color="#979900"/><stop offset="0.998" stop-color="#998a00"/></linearGradient><linearGradient id="c77" x1="0" x2="1" y1="0" y2="0"><stop offset="0.010" stop-color="#00ff1c"/><stop offset="0.050" stop-color="#01ff1b"/><stop offset="0.390" stop-color="#2aff11"/><stop offset="0.990" stop-color="#7bff00"/></linearGradient><linearGradient id="c78" x1="0" x2="1" y1="0" y2="0"><stop offset="0.002" stop-color="#009936"/><stop offset="0.610" stop-color="#009912"/><stop offset="0.794" stop-color="#489901"/><stop offset="0.954" stop-color="#999900"/><stop offset="0.998" stop-color="#998300"/></linearGradient><linearGradient id="c79" x1="0" x2="1" y1="0" y2="0"><stop offset="0.009" stop-color="#00ff1e"/><stop offset="0.462" stop-color="#39ff10"/><stop offset="0.991" stop-color="#88ff00"/></linearGradient><linearGradient id="c80" x1="0" x2="1" y1="0" y2="0"><stop offset="0.002" stop-color="#009938"/><stop offset="0.601" stop-color="#009914"/><stop offset="0.776" stop-color="#459903"/><stop offset="0.938" stop-color="#979900"/><stop offset="0.998" stop-color="#997d00"/></linearGradient><linearGradient id="c81" x1="0" x2="1" y1="0" y2="0"><stop offset="0.009" stop-color="#00ff21"/><stop offset="0.457" stop-color="#3eff12"/><stop offset="0.991" stop-color="#98ff00"/></linearGradient><linearGradient id="c82" x1="0" x2="1" y1="0" y2="0"><stop offset="0.002" stop-color="#009939"/><stop offset="0.593" stop-color="#009915"/><stop offset="0.766" stop-color="#479905"/><stop offset="0.923" stop-color="#989900"/><stop offset="0.998" stop-color="#997600"/></linearGradient><linearGradient id="c83" x1="0" x2="1" y1="0" y2="0"><stop offset="0.008" stop-color="#00ff24"/><stop offset="0.040" stop-color="#01ff23"/><stop offset="0.444" stop-color="#40ff14"/><stop offset="0.992" stop-color="#a5ff00"/></linearGradient><linearGradient id="c84" x1="0" x2="1" y1="0" y2="0"><stop offset="0.002" stop-color="#00993a"/><stop offset="0.584" stop-color="#009917"/><stop offset="0.756" stop-color="#479907"/><stop offset="0.814" stop-color="#649900"/><stop offset="0.908" stop-color="#979900"/><stop offset="0.998" stop-color="#997000"/></linearGradient><linearGradient id="c85" x1="0" x2="1" y1="0" y2="0"><stop offset="0.008" stop-color="#00ff26"/><stop offset="0.485" stop-color="#4eff14"/><stop offset="0.992" stop-color="#b4ff00"/></linearGradient><linearGradient id="c86" x1="0" x2="1" y1="0" y2="0"><stop offset="0.002" stop-color="#00993b"/><stop offset="0.573" stop-color="#009919"/><stop offset="0.739" stop-color="#469909"/><stop offset="0.817" stop-color="#6c9900"/><stop offset="0.894" stop-color="#989900"/><stop offset="0.998" stop-color="#996a00"/></linearGradient><linearGradient id="c87" x1="0" x2="1" y1="0" y2="0"><stop offset="0.007" stop-color="#00ff29"/><stop offset="0.152" stop-color="#15ff24"/><stop offset="0.486" stop-color="#53ff16"/><stop offset="0.993" stop-color="#c3ff00"/></linearGradient><linearGradient id="c88" x1="0" x2="1" y1="0" y2="0"><stop offset="0.002" stop-color="#00993d"/><stop offset="0.569" stop-color="#01991a"/><stop offset="0.734" stop-color="#48990a"/><stop offset="0.822" stop-color="#759900"/><stop offset="0.883" stop-color="#999900"/><stop offset="0.937" stop-color="#997c00"/><stop offset="0.998" stop-color="#996500"/></linearGradient><linearGradient id="c89" x1="0" x2="1" y1="0" y2="0"><stop offset="0.007" stop-color="#00ff2c"/><stop offset="0.144" stop-color="#15ff27"/><stop offset="0.486" stop-color="#59ff18"/><stop offset="0.993" stop-color="#d2ff00"/></linearGradient><linearGradient id="c90" x1="0" x2="1" y1="0" y2="0"><stop offset="0.002" stop-color="#00993e"/><stop offset="0.559" stop-color="#00991c"/><stop offset="0.722" stop-color="#48990c"/><stop offset="0.866" stop-color="#989900"/><stop offset="0.930" stop-color="#997800"/><stop offset="0.998" stop-color="#995f00"/></linearGradient><linearGradient id="c91" x1="0" x2="1" y1="0" y2="0"><stop offset="0.007" stop-color="#00ff2f"/><stop offset="0.204" stop-color="#24ff27"/><stop offset="0.507" stop-color="#65ff18"/><stop offset="0.757" stop-color="#a2ff0b"/><stop offset="0.993" stop-color="#e2ff00"/></linearGradient><linearGradient id="c92" x1="0" x2="1" y1="0" y2="0"><stop offset="0.002" stop-color="#00993f"/><stop offset="0.549" stop-color="#00991e"/><stop offset="0.708" stop-color="#46990f"/><stop offset="0.855" stop-color="#999900"/><stop offset="0.919" stop-color="#997700"/><stop offset="0.998" stop-color="#995b00"/></linearGradient><linearGradient id="c93" x1="0" x2="1" y1="0" y2="0"><stop offset="0.006" stop-color="#00ff32"/><stop offset="0.194" stop-color="#23ff2a"/><stop offset="0.506" stop-color="#6bff1a"/><stop offset="0.756" stop-color="#adff0c"/><stop offset="0.994" stop-color="#f4ff00"/></linearGradient><linearGradient id="c94" x1="0" x2="1" y1="0" y2="0"><stop offset="0.002" stop-color="#009941"/><stop offset="0.539" stop-color="#009920"/><stop offset="0.692" stop-color="#449911"/><stop offset="0.838" stop-color="#989900"/><stop offset="0.912" stop-color="#997300"/><stop offset="0.998" stop-color="#995500"/></linearGradient><linearGradient id="c95" x1="0" x2="1" y1="0" y2="0"><stop offset="0.006" stop-color="#00ff35"/><stop offset="0.149" stop-color="#1bff2f"/><stop offset="0.446" stop-color="#62ff20"/><stop offset="0.720" stop-color="#aeff10"/><stop offset="0.970" stop-color="#fdff00"/><stop offset="0.994" stop-color="#fff900"/></linearGradient><linearGradient id="c96" x1="0" x2="1" y1="0" y2="0"><stop offset="0.002" stop-color="#009942"/><stop offset="0.535" stop-color="#009921"/><stop offset="0.691" stop-color="#489912"/><stop offset="0.828" stop-color="#999901"/><stop offset="0.902" stop-color="#997200"/><stop offset="0.998" stop-color="#995100"/></linearGradient><linearGradient id="c97" x1="0" x2="1" y1="0" y2="0"><stop offset="0.006" stop-color="#00ff38"/><stop offset="0.201" stop-color="#2bff2f"/><stop offset="0.477" stop-color="#72ff20"/><stop offset="0.707" stop-color="#b6ff11"/><stop offset="0.925" stop-color="#ffff02"/><stop offset="0.994" stop-color="#ffe800"/></linearGradient><linearGradient id="c98" x1="0" x2="1" y1="0" y2="0"><stop offset="0.002" stop-color="#009944"/><stop offset="0.528" stop-color="#009923"/><stop offset="0.678" stop-color="#479915"/><stop offset="0.814" stop-color="#989904"/><stop offset="0.899" stop-color="#996e00"/><stop offset="0.998" stop-color="#994e00"/></linearGradient><linearGradient id="c99" x1="0" x2="1" y1="0" y2="0"><stop offset="0.005" stop-color="#00ff3b"/><stop offset="0.181" stop-color="#27ff33"/><stop offset="0.445" stop-color="#6fff24"/><stop offset="0.665" stop-color="#b3ff16"/><stop offset="0.874" stop-color="#fdff07"/><stop offset="0.995" stop-color="#ffd900"/></linearGradient><linearGradient id="c100" x1="0" x2="1" y1="0" y2="0"><stop offset="0.002" stop-color="#009945"/><stop offset="0.516" stop-color="#009925"/><stop offset="0.662" stop-color="#459917"/><stop offset="0.801" stop-color="#999906"/><stop offset="0.885" stop-color="#996c00"/><stop offset="0.998" stop-color="#994900"/></linearGradient><linearGradient id="c101" x1="0" x2="1" y1="0" y2="0"><stop offset="0.005" stop-color="#00ff3f"/><stop offset="0.026" stop-color="#01ff3e"/><stop offset="0.153" stop-color="#21ff37"/><stop offset="0.416" stop-color="#6cff28"/><stop offset="0.637" stop-color="#b4ff19"/><stop offset="0.837" stop-color="#ffff0a"/><stop offset="0.995" stop-color="#ffca00"/></linearGradient><linearGradient id="c102" x1="0" x2="1" y1="0" y2="0"><stop offset="0.002" stop-color="#009947"/><stop offset="0.513" stop-color="#009927"/><stop offset="0.658" stop-color="#479919"/><stop offset="0.792" stop-color="#999808"/><stop offset="0.882" stop-color="#996800"/><stop offset="0.998" stop-color="#994600"/></linearGradient><linearGradient id="c103" x1="0" x2="1" y1="0" y2="0"><stop offset="0.005" stop-color="#00ff42"/><stop offset="0.168" stop-color="#29ff39"/><stop offset="0.403" stop-color="#70ff2b"/><stop offset="0.607" stop-color="#b6ff1d"/><stop offset="0.791" stop-color="#fdff0f"/><stop offset="0.995" stop-color="#ffbd00"/></linearGradient><linearGradient id="c104" x1="0" x2="1" y1="0" y2="0"><stop offset="0.002" stop-color="#009948"/><stop offset="0.504" stop-color="#009929"/><stop offset="0.647" stop-color="#47991b"/><stop offset="0.776" stop-color="#99990b"/><stop offset="0.819" stop-color="#997f04"/><stop offset="0.869" stop-color="#996700"/><stop offset="0.998" stop-color="#994200"/></linearGradient><linearGradient id="c105" x1="0" x2="1" y1="0" y2="0"><stop offset="0.005" stop-color="#00ff45"/><stop offset="0.152" stop-color="#26ff3d"/><stop offset="0.387" stop-color="#70ff2f"/><stop offset="0.583" stop-color="#b7ff21"/><stop offset="0.760" stop-color="#ffff13"/><stop offset="0.868" stop-color="#ffd608"/><stop offset="0.995" stop-color="#ffb100"/></linearGradient><linearGradient id="c106" x1="0" x2="1" y1="0" y2="0"><stop offset="0.002" stop-color="#00994a"/><stop offset="0.495" stop-color="#00992b"/><stop offset="0.630" stop-color="#43991e"/><stop offset="0.766" stop-color="#99980e"/><stop offset="0.809" stop-color="#997d06"/><stop offset="0.863" stop-color="#996500"/><stop offset="0.998" stop-color="#993e00"/></linearGradient><linearGradient id="c107" x1="0" x2="1" y1="0" y2="0"><stop offset="0.005" stop-color="#00ff49"/><stop offset="0.024" stop-color="#01ff48"/><stop offset="0.127" stop-color="#20ff42"/><stop offset="0.363" stop-color="#6dff33"/><stop offset="0.552" stop-color="#b4ff25"/><stop offset="0.722" stop-color="#fdff18"/><stop offset="0.863" stop-color="#ffcb08"/><stop offset="0.995" stop-color="#ffa600"/></linearGradient><linearGradient id="c108" x1="0" x2="1" y1="0" y2="0"><stop offset="0.002" stop-color="#00994b"/><stop offset="0.489" stop-color="#00992d"/><stop offset="0.627" stop-color="#489920"/><stop offset="0.751" stop-color="#999911"/><stop offset="0.797" stop-color="#997c08"/><stop offset="0.853" stop-color="#996300"/><stop offset="0.998" stop-color="#993b00"/></linearGradient><linearGradient id="c109" x1="0" x2="1" y1="0" y2="0"><stop offset="0.005" stop-color="#00ff4c"/><stop offset="0.151" stop-color="#2bff43"/><stop offset="0.353" stop-color="#70ff36"/><stop offset="0.528" stop-color="#b5ff29"/><stop offset="0.693" stop-color="#ffff1c"/><stop offset="0.830" stop-color="#ffc90b"/><stop offset="0.995" stop-color="#ff9b00"/></linearGradient><linearGradient id="c110" x1="0" x2="1" y1="0" y2="0"><stop offset="0.002" stop-color="#00994d"/><stop offset="0.482" stop-color="#00992f"/><stop offset="0.616" stop-color="#469923"/><stop offset="0.742" stop-color="#999813"/><stop offset="0.791" stop-color="#997909"/><stop offset="0.847" stop-color="#996002"/><stop offset="0.998" stop-color="#993800"/></linearGradient><linearGradient id="c111" x1="0" x2="1" y1="0" y2="0"><stop offset="0.004" stop-color="#00ff50"/><stop offset="0.127" stop-color="#24ff48"/><stop offset="0.329" stop-color="#6dff3b"/><stop offset="0.487" stop-color="#aeff2f"/><stop offset="0.662" stop-color="#fffd1f"/><stop offset="0.811" stop-color="#ffc10d"/><stop offset="0.996" stop-color="#ff9000"/></linearGradient><linearGradient id="c112" x1="0" x2="1" y1="0" y2="0"><stop offset="0.002" stop-color="#00994f"/><stop offset="0.474" stop-color="#009932"/><stop offset="0.606" stop-color="#469925"/><stop offset="0.727" stop-color="#999916"/><stop offset="0.780" stop-color="#99780b"/><stop offset="0.839" stop-color="#995e03"/><stop offset="0.911" stop-color="#994700"/><stop offset="0.998" stop-color="#993400"/></linearGradient><linearGradient id="c113" x1="0" x2="1" y1="0" y2="0"><stop offset="0.004" stop-color="#00ff53"/><stop offset="0.021" stop-color="#01ff52"/><stop offset="0.114" stop-color="#21ff4d"/><stop offset="0.318" stop-color="#6dff3f"/><stop offset="0.479" stop-color="#b3ff32"/><stop offset="0.631" stop-color="#feff25"/><stop offset="0.708" stop-color="#ffdc19"/><stop offset="0.792" stop-color="#ffbc0f"/><stop offset="0.996" stop-color="#ff8700"/></linearGradient><linearGradient id="c114" x1="0" x2="1" y1="0" y2="0"><stop offset="0.002" stop-color="#009950"/><stop offset="0.469" stop-color="#009934"/><stop offset="0.600" stop-color="#489927"/><stop offset="0.715" stop-color="#979919"/><stop offset="0.773" stop-color="#99750d"/><stop offset="0.832" stop-color="#995b04"/><stop offset="0.908" stop-color="#994400"/><stop offset="0.998" stop-color="#993200"/></linearGradient><linearGradient id="c115" x1="0" x2="1" y1="0" y2="0"><stop offset="0.004" stop-color="#00ff57"/><stop offset="0.020" stop-color="#00ff56"/><stop offset="0.086" stop-color="#17ff52"/><stop offset="0.291" stop-color="#67ff44"/><stop offset="0.447" stop-color="#acff38"/><stop offset="0.611" stop-color="#fffd29"/><stop offset="0.693" stop-color="#ffd61c"/><stop offset="0.783" stop-color="#ffb510"/><stop offset="0.996" stop-color="#ff7e00"/></linearGradient><linearGradient id="c116" x1="0" x2="1" y1="0" y2="0"><stop offset="0.002" stop-color="#009952"/><stop offset="0.461" stop-color="#009936"/><stop offset="0.587" stop-color="#46992a"/><stop offset="0.704" stop-color="#98991c"/><stop offset="0.759" stop-color="#99760f"/><stop offset="0.824" stop-color="#995905"/><stop offset="0.902" stop-color="#994200"/><stop offset="0.998" stop-color="#992f00"/></linearGradient><linearGradient id="c117" x1="0" x2="1" y1="0" y2="0"><stop offset="0.004" stop-color="#00ff5b"/><stop offset="0.116" stop-color="#26ff54"/><stop offset="0.292" stop-color="#6eff47"/><stop offset="0.444" stop-color="#b5ff3b"/><stop offset="0.580" stop-color="#feff2e"/><stop offset="0.668" stop-color="#ffd41f"/><stop offset="0.764" stop-color="#ffb012"/><stop offset="0.876" stop-color="#ff9007"/><stop offset="0.996" stop-color="#ff7600"/></linearGradient><linearGradient id="c118" x1="0" x2="1" y1="0" y2="0"><stop offset="0.002" stop-color="#009954"/><stop offset="0.454" stop-color="#009939"/><stop offset="0.577" stop-color="#44992d"/><stop offset="0.692" stop-color="#97991f"/><stop offset="0.753" stop-color="#997311"/><stop offset="0.818" stop-color="#995706"/><stop offset="0.900" stop-color="#993f00"/><stop offset="0.998" stop-color="#992c00"/></linearGradient><linearGradient id="c119" x1="0" x2="1" y1="0" y2="0"><stop offset="0.004" stop-color="#00ff5f"/><stop offset="0.019" stop-color="#01ff5e"/><stop offset="0.097" stop-color="#1fff59"/><stop offset="0.275" stop-color="#6bff4c"/><stop offset="0.415" stop-color="#aeff41"/><stop offset="0.562" stop-color="#fffe33"/><stop offset="0.647" stop-color="#ffd223"/><stop offset="0.748" stop-color="#ffac14"/><stop offset="0.864" stop-color="#ff8b08"/><stop offset="0.996" stop-color="#ff6f00"/></linearGradient><linearGradient id="c120" x1="0" x2="1" y1="0" y2="0"><stop offset="0.002" stop-color="#009956"/><stop offset="0.449" stop-color="#00993b"/><stop offset="0.575" stop-color="#49992f"/><stop offset="0.683" stop-color="#989922"/><stop offset="0.741" stop-color="#997313"/><stop offset="0.808" stop-color="#995608"/><stop offset="0.876" stop-color="#994200"/><stop offset="0.998" stop-color="#992a00"/></linearGradient><linearGradient id="c121" x1="0" x2="1" y1="0" y2="0"><stop offset="0.004" stop-color="#00ff63"/><stop offset="0.019" stop-color="#01ff62"/><stop offset="0.086" stop-color="#1bff5e"/><stop offset="0.267" stop-color="#6bff50"/><stop offset="0.410" stop-color="#b4ff45"/><stop offset="0.538" stop-color="#feff38"/><stop offset="0.628" stop-color="#ffd026"/><stop offset="0.733" stop-color="#ffa717"/><stop offset="0.853" stop-color="#ff8509"/><stop offset="0.996" stop-color="#ff6800"/></linearGradient><linearGradient id="c122" x1="0" x2="1" y1="0" y2="0"><stop offset="0.002" stop-color="#009957"/><stop offset="0.441" stop-color="#00993d"/><stop offset="0.562" stop-color="#479932"/><stop offset="0.669" stop-color="#979925"/><stop offset="0.733" stop-color="#997015"/><stop offset="0.800" stop-color="#995309"/><stop offset="0.878" stop-color="#993d00"/><stop offset="0.998" stop-color="#992700"/></linearGradient><linearGradient id="c123" x1="0" x2="1" y1="0" y2="0"><stop offset="0.004" stop-color="#00ff67"/><stop offset="0.099" stop-color="#24ff60"/><stop offset="0.261" stop-color="#6fff54"/><stop offset="0.386" stop-color="#b1ff4a"/><stop offset="0.518" stop-color="#fffe3d"/><stop offset="0.607" stop-color="#ffce2a"/><stop offset="0.717" stop-color="#ffa319"/><stop offset="0.842" stop-color="#ff800b"/><stop offset="0.996" stop-color="#ff6100"/></linearGradient><linearGradient id="c124" x1="0" x2="1" y1="0" y2="0"><stop offset="0.002" stop-color="#009959"/><stop offset="0.435" stop-color="#009940"/><stop offset="0.552" stop-color="#459935"/><stop offset="0.662" stop-color="#989928"/><stop offset="0.722" stop-color="#997117"/><stop offset="0.795" stop-color="#99510a"/><stop offset="0.882" stop-color="#993900"/><stop offset="0.998" stop-color="#992500"/></linearGradient><linearGradient id="c125" x1="0" x2="1" y1="0" y2="0"><stop offset="0.004" stop-color="#00ff6b"/><stop offset="0.018" stop-color="#02ff6a"/><stop offset="0.082" stop-color="#1dff66"/><stop offset="0.246" stop-color="#6bff5a"/><stop offset="0.375" stop-color="#b2ff4f"/><stop offset="0.496" stop-color="#feff43"/><stop offset="0.596" stop-color="#ffc92c"/><stop offset="0.704" stop-color="#ff9f1b"/><stop offset="0.839" stop-color="#ff790b"/><stop offset="0.996" stop-color="#ff5b00"/></linearGradient><linearGradient id="c126" x1="0" x2="1" y1="0" y2="0"><stop offset="0.002" stop-color="#00995b"/><stop offset="0.429" stop-color="#009942"/><stop offset="0.545" stop-color="#479938"/><stop offset="0.647" stop-color="#97992c"/><stop offset="0.714" stop-color="#996e19"/><stop offset="0.786" stop-color="#994f0b"/><stop offset="0.886" stop-color="#993500"/><stop offset="0.998" stop-color="#992200"/></linearGradient><linearGradient id="c127" x1="0" x2="1" y1="0" y2="0"><stop offset="0.003" stop-color="#00ff6f"/><stop offset="0.017" stop-color="#01ff6e"/><stop offset="0.066" stop-color="#16ff6b"/><stop offset="0.233" stop-color="#68ff5f"/><stop offset="0.358" stop-color="#afff54"/><stop offset="0.483" stop-color="#fffe48"/><stop offset="0.580" stop-color="#ffc630"/><stop offset="0.691" stop-color="#ff9a1d"/><stop offset="0.830" stop-color="#ff740c"/><stop offset="0.997" stop-color="#ff5500"/></linearGradient><linearGradient id="c128" x1="0" x2="1" y1="0" y2="0"><stop offset="0.002" stop-color="#00995d"/><stop offset="0.423" stop-color="#009945"/><stop offset="0.538" stop-color="#47993a"/><stop offset="0.640" stop-color="#98992f"/><stop offset="0.702" stop-color="#996e1b"/><stop offset="0.778" stop-color="#994e0d"/><stop offset="0.890" stop-color="#993100"/><stop offset="0.998" stop-color="#992000"/></linearGradient><linearGradient id="c129" x1="0" x2="1" y1="0" y2="0"><stop offset="0.003" stop-color="#00ff73"/><stop offset="0.092" stop-color="#26ff6d"/><stop offset="0.235" stop-color="#6fff63"/><stop offset="0.350" stop-color="#b4ff59"/><stop offset="0.459" stop-color="#fdff4e"/><stop offset="0.561" stop-color="#ffc433"/><stop offset="0.677" stop-color="#ff961e"/><stop offset="0.820" stop-color="#ff700d"/><stop offset="0.997" stop-color="#ff4f00"/></linearGradient><linearGradient id="c130" x1="0" x2="1" y1="0" y2="0"><stop offset="0.002" stop-color="#00995f"/><stop offset="0.413" stop-color="#009948"/><stop offset="0.525" stop-color="#45993e"/><stop offset="0.629" stop-color="#999932"/><stop offset="0.691" stop-color="#996d1d"/><stop offset="0.770" stop-color="#994c0e"/><stop offset="0.891" stop-color="#992e00"/><stop offset="0.998" stop-color="#991e00"/></linearGradient><linearGradient id="c131" x1="0" x2="1" y1="0" y2="0"><stop offset="0.003" stop-color="#00ff78"/><stop offset="0.017" stop-color="#02ff77"/><stop offset="0.076" stop-color="#1eff73"/><stop offset="0.222" stop-color="#6cff68"/><stop offset="0.334" stop-color="#b1ff5e"/><stop offset="0.447" stop-color="#fffe53"/><stop offset="0.546" stop-color="#ffc237"/><stop offset="0.666" stop-color="#ff9220"/><stop offset="0.811" stop-color="#ff6b0e"/><stop offset="0.997" stop-color="#ff4a00"/></linearGradient><linearGradient id="c132" x1="0" x2="1" y1="0" y2="0"><stop offset="0.002" stop-color="#009961"/><stop offset="0.411" stop-color="#00994a"/><stop offset="0.521" stop-color="#489941"/><stop offset="0.619" stop-color="#989936"/><stop offset="0.683" stop-color="#996c20"/><stop offset="0.761" stop-color="#994b0f"/><stop offset="0.894" stop-color="#992b00"/><stop offset="0.998" stop-color="#991c00"/></linearGradient><linearGradient id="c133" x1="0" x2="1" y1="0" y2="0"><stop offset="0.003" stop-color="#00ff7d"/><stop offset="0.016" stop-color="#01ff7c"/><stop offset="0.055" stop-color="#14ff79"/><stop offset="0.203" stop-color="#65ff6e"/><stop offset="0.306" stop-color="#a5ff65"/><stop offset="0.435" stop-color="#fffc58"/><stop offset="0.532" stop-color="#ffc03b"/><stop offset="0.655" stop-color="#ff8e22"/><stop offset="0.810" stop-color="#ff650e"/><stop offset="0.997" stop-color="#ff4500"/></linearGradient><linearGradient id="c134" x1="0" x2="1" y1="0" y2="0"><stop offset="0.002" stop-color="#009963"/><stop offset="0.404" stop-color="#00994d"/><stop offset="0.513" stop-color="#489944"/><stop offset="0.609" stop-color="#999939"/><stop offset="0.674" stop-color="#996b22"/><stop offset="0.754" stop-color="#994911"/><stop offset="0.895" stop-color="#992800"/><stop offset="0.998" stop-color="#991a00"/></linearGradient><linearGradient id="c135" x1="0" x2="1" y1="0" y2="0"><stop offset="0.003" stop-color="#00ff81"/><stop offset="0.085" stop-color="#27ff7c"/><stop offset="0.212" stop-color="#70ff72"/><stop offset="0.313" stop-color="#b3ff69"/><stop offset="0.415" stop-color="#ffff5f"/><stop offset="0.465" stop-color="#ffdb4d"/><stop offset="0.516" stop-color="#ffbe3e"/><stop offset="0.642" stop-color="#ff8a24"/><stop offset="0.801" stop-color="#ff610f"/><stop offset="0.997" stop-color="#ff4000"/></linearGradient><linearGradient id="c136" x1="0" x2="1" y1="0" y2="0"><stop offset="0.002" stop-color="#009965"/><stop offset="0.396" stop-color="#009950"/><stop offset="0.502" stop-color="#469947"/><stop offset="0.598" stop-color="#98993d"/><stop offset="0.665" stop-color="#996924"/><stop offset="0.745" stop-color="#994712"/><stop offset="0.899" stop-color="#992500"/><stop offset="0.998" stop-color="#991800"/></linearGradient><linearGradient id="c137" x1="0" x2="1" y1="0" y2="0"><stop offset="0.003" stop-color="#00ff86"/><stop offset="0.015" stop-color="#02ff85"/><stop offset="0.065" stop-color="#1cff82"/><stop offset="0.194" stop-color="#69ff78"/><stop offset="0.287" stop-color="#a7ff70"/><stop offset="0.404" stop-color="#fffc64"/><stop offset="0.454" stop-color="#ffd851"/><stop offset="0.503" stop-color="#ffbc42"/><stop offset="0.633" stop-color="#ff8626"/><stop offset="0.793" stop-color="#ff5c10"/><stop offset="0.997" stop-color="#ff3b00"/></linearGradient><linearGradient id="c138" x1="0" x2="1" y1="0" y2="0"><stop offset="0.002" stop-color="#009967"/><stop offset="0.393" stop-color="#019953"/><stop offset="0.498" stop-color="#49994a"/><stop offset="0.591" stop-color="#999940"/><stop offset="0.654" stop-color="#996a27"/><stop offset="0.740" stop-color="#994513"/><stop offset="0.903" stop-color="#992200"/><stop offset="0.998" stop-color="#991600"/></linearGradient><linearGradient id="c139" x1="0" x2="1" y1="0" y2="0"><stop offset="0.003" stop-color="#00ff8b"/><stop offset="0.015" stop-color="#01ff8a"/><stop offset="0.057" stop-color="#18ff88"/><stop offset="0.189" stop-color="#69ff7e"/><stop offset="0.290" stop-color="#b1ff75"/><stop offset="0.386" stop-color="#ffff6b"/><stop offset="0.434" stop-color="#ffda57"/><stop offset="0.488" stop-color="#ffb946"/><stop offset="0.620" stop-color="#ff8228"/><stop offset="0.787" stop-color="#ff5710"/><stop offset="0.997" stop-color="#ff3600"/></linearGradient><linearGradient id="c140" x1="0" x2="1" y1="0" y2="0"><stop offset="0.002" stop-color="#00996a"/><stop offset="0.386" stop-color="#009956"/><stop offset="0.487" stop-color="#46994e"/><stop offset="0.579" stop-color="#979945"/><stop offset="0.645" stop-color="#996829"/><stop offset="0.730" stop-color="#994415"/><stop offset="0.809" stop-color="#993009"/><stop offset="0.904" stop-color="#992000"/><stop offset="0.998" stop-color="#991400"/></linearGradient><linearGradient id="c141" x1="0" x2="1" y1="0" y2="0"><stop offset="0.003" stop-color="#00ff90"/><stop offset="0.068" stop-color="#22ff8c"/><stop offset="0.179" stop-color="#69ff83"/><stop offset="0.268" stop-color="#a9ff7c"/><stop offset="0.374" stop-color="#fffc71"/><stop offset="0.421" stop-color="#ffd85c"/><stop offset="0.479" stop-color="#ffb448"/><stop offset="0.609" stop-color="#ff7e2a"/><stop offset="0.779" stop-color="#ff5311"/><stop offset="0.997" stop-color="#ff3200"/></linearGradient><linearGradient id="c142" x1="0" x2="1" y1="0" y2="0"><stop offset="0.002" stop-color="#00996c"/><stop offset="0.379" stop-color="#009959"/><stop offset="0.480" stop-color="#479951"/><stop offset="0.571" stop-color="#999948"/><stop offset="0.602" stop-color="#997e38"/><stop offset="0.637" stop-color="#99672b"/><stop offset="0.725" stop-color="#994216"/><stop offset="0.803" stop-color="#992e0a"/><stop offset="0.901" stop-color="#991e01"/><stop offset="0.998" stop-color="#991300"/></linearGradient><linearGradient id="c143" x1="0" x2="1" y1="0" y2="0"><stop offset="0.003" stop-color="#00ff95"/><stop offset="0.014" stop-color="#02ff94"/><stop offset="0.060" stop-color="#1dff91"/><stop offset="0.181" stop-color="#6dff89"/><stop offset="0.273" stop-color="#b4ff81"/><stop offset="0.359" stop-color="#ffff79"/><stop offset="0.405" stop-color="#ffd963"/><stop offset="0.463" stop-color="#ffb54d"/><stop offset="0.526" stop-color="#ff963c"/><stop offset="0.595" stop-color="#ff7c2c"/><stop offset="0.767" stop-color="#ff5013"/><stop offset="0.997" stop-color="#ff2e00"/></linearGradient><linearGradient id="c144" x1="0" x2="1" y1="0" y2="0"><stop offset="0.002" stop-color="#00996e"/><stop offset="0.375" stop-color="#01995c"/><stop offset="0.472" stop-color="#479955"/><stop offset="0.559" stop-color="#97994d"/><stop offset="0.628" stop-color="#99662d"/><stop offset="0.715" stop-color="#994117"/><stop offset="0.793" stop-color="#992d0b"/><stop offset="0.889" stop-color="#991d02"/><stop offset="0.998" stop-color="#991100"/></linearGradient><linearGradient id="c145" x1="0" x2="1" y1="0" y2="0"><stop offset="0.003" stop-color="#00ff9b"/><stop offset="0.014" stop-color="#01ff9a"/><stop offset="0.048" stop-color="#16ff98"/><stop offset="0.166" stop-color="#65ff8f"/><stop offset="0.250" stop-color="#a7ff89"/><stop offset="0.351" stop-color="#fffd7e"/><stop offset="0.402" stop-color="#ffd365"/><stop offset="0.458" stop-color="#ffb04f"/><stop offset="0.520" stop-color="#ff923d"/><stop offset="0.593" stop-color="#ff772d"/><stop offset="0.767" stop-color="#ff4b13"/><stop offset="0.997" stop-color="#ff2a00"/></linearGradient><linearGradient id="c146" x1="0" x2="1" y1="0" y2="0"><stop offset="0.002" stop-color="#009970"/><stop offset="0.368" stop-color="#009960"/><stop offset="0.464" stop-color="#479959"/><stop offset="0.551" stop-color="#999951"/><stop offset="0.582" stop-color="#997d3f"/><stop offset="0.620" stop-color="#996430"/><stop offset="0.710" stop-color="#993f18"/><stop offset="0.787" stop-color="#992c0c"/><stop offset="0.884" stop-color="#991c02"/><stop offset="0.998" stop-color="#990f00"/></linearGradient><linearGradient id="c147" x1="0" x2="1" y1="0" y2="0"><stop offset="0.003" stop-color="#00ffa0"/><stop offset="0.064" stop-color="#23ff9c"/><stop offset="0.169" stop-color="#6eff95"/><stop offset="0.251" stop-color="#b2ff8e"/><stop offset="0.334" stop-color="#ffff86"/><stop offset="0.384" stop-color="#ffd46c"/><stop offset="0.439" stop-color="#ffb055"/><stop offset="0.506" stop-color="#ff9041"/><stop offset="0.577" stop-color="#ff7530"/><stop offset="0.760" stop-color="#ff4814"/><stop offset="0.997" stop-color="#ff2600"/></linearGradient><linearGradient id="c148" x1="0" x2="1" y1="0" y2="0"><stop offset="0.002" stop-color="#009973"/><stop offset="0.362" stop-color="#009963"/><stop offset="0.454" stop-color="#45995d"/><stop offset="0.540" stop-color="#979955"/><stop offset="0.577" stop-color="#997940"/><stop offset="0.611" stop-color="#996332"/><stop offset="0.700" stop-color="#993e1a"/><stop offset="0.777" stop-color="#992b0e"/><stop offset="0.872" stop-color="#991b03"/><stop offset="0.998" stop-color="#990d00"/></linearGradient><linearGradient id="c149" x1="0" x2="1" y1="0" y2="0"><stop offset="0.003" stop-color="#00ffa6"/><stop offset="0.014" stop-color="#02ffa5"/><stop offset="0.051" stop-color="#1bffa3"/><stop offset="0.159" stop-color="#6aff9b"/><stop offset="0.235" stop-color="#a9ff95"/><stop offset="0.327" stop-color="#fffd8c"/><stop offset="0.376" stop-color="#ffd270"/><stop offset="0.430" stop-color="#ffae59"/><stop offset="0.495" stop-color="#ff8e44"/><stop offset="0.570" stop-color="#ff7132"/><stop offset="0.754" stop-color="#ff4415"/><stop offset="0.997" stop-color="#ff2200"/></linearGradient><linearGradient id="c150" x1="0" x2="1" y1="0" y2="0"><stop offset="0.002" stop-color="#009975"/><stop offset="0.359" stop-color="#019967"/><stop offset="0.451" stop-color="#489960"/><stop offset="0.534" stop-color="#999959"/><stop offset="0.564" stop-color="#997c46"/><stop offset="0.601" stop-color="#996335"/><stop offset="0.693" stop-color="#993d1c"/><stop offset="0.821" stop-color="#992009"/><stop offset="0.916" stop-color="#991400"/><stop offset="0.998" stop-color="#990c00"/></linearGradient><linearGradient id="c151" x1="0" x2="1" y1="0" y2="0"><stop offset="0.003" stop-color="#00ffab"/><stop offset="0.013" stop-color="#01ffab"/><stop offset="0.045" stop-color="#17ffa9"/><stop offset="0.156" stop-color="#6affa2"/><stop offset="0.235" stop-color="#afff9c"/><stop offset="0.315" stop-color="#feff95"/><stop offset="0.368" stop-color="#ffcf75"/><stop offset="0.421" stop-color="#ffac5d"/><stop offset="0.484" stop-color="#ff8b47"/><stop offset="0.558" stop-color="#ff6f34"/><stop offset="0.743" stop-color="#ff4216"/><stop offset="0.997" stop-color="#ff1f00"/></linearGradient><linearGradient id="c152" x1="0" x2="1" y1="0" y2="0"><stop offset="0.002" stop-color="#009978"/><stop offset="0.351" stop-color="#00996a"/><stop offset="0.442" stop-color="#489964"/><stop offset="0.521" stop-color="#97995e"/><stop offset="0.558" stop-color="#997947"/><stop offset="0.591" stop-color="#996238"/><stop offset="0.685" stop-color="#993b1c"/><stop offset="0.856" stop-color="#991905"/><stop offset="0.998" stop-color="#990a00"/></linearGradient><linearGradient id="c153" x1="0" x2="1" y1="0" y2="0"><stop offset="0.003" stop-color="#00ffb1"/><stop offset="0.055" stop-color="#21ffae"/><stop offset="0.148" stop-color="#6bffa8"/><stop offset="0.221" stop-color="#acffa3"/><stop offset="0.305" stop-color="#fffd9b"/><stop offset="0.352" stop-color="#ffd17d"/><stop offset="0.409" stop-color="#ffa961"/><stop offset="0.471" stop-color="#ff894b"/><stop offset="0.549" stop-color="#ff6c36"/><stop offset="0.638" stop-color="#ff5325"/><stop offset="0.742" stop-color="#ff3d16"/><stop offset="0.997" stop-color="#ff1c00"/></linearGradient><linearGradient id="c154" x1="0" x2="1" y1="0" y2="0"><stop offset="0.002" stop-color="#00997b"/><stop offset="0.346" stop-color="#00996e"/><stop offset="0.434" stop-color="#459969"/><stop offset="0.515" stop-color="#989963"/><stop offset="0.548" stop-color="#99794c"/><stop offset="0.585" stop-color="#99613a"/><stop offset="0.678" stop-color="#993a1e"/><stop offset="0.811" stop-color="#991d0a"/><stop offset="0.920" stop-color="#991000"/><stop offset="0.998" stop-color="#990900"/></linearGradient><linearGradient id="c155" x1="0" x2="1" y1="0" y2="0"><stop offset="0.003" stop-color="#00ffb7"/><stop offset="0.013" stop-color="#03ffb7"/><stop offset="0.048" stop-color="#1dffb5"/><stop offset="0.145" stop-color="#6bffaf"/><stop offset="0.222" stop-color="#b2ffaa"/><stop offset="0.293" stop-color="#feffa4"/><stop offset="0.344" stop-color="#ffcf81"/><stop offset="0.401" stop-color="#ffa765"/><stop offset="0.462" stop-color="#ff874e"/><stop offset="0.538" stop-color="#ff6a39"/><stop offset="0.630" stop-color="#ff5026"/><stop offset="0.732" stop-color="#ff3b17"/><stop offset="0.997" stop-color="#ff1900"/></linearGradient><linearGradient id="c156" x1="0" x2="1" y1="0" y2="0"><stop offset="0.002" stop-color="#00997d"/><stop offset="0.342" stop-color="#019972"/><stop offset="0.426" stop-color="#46996d"/><stop offset="0.508" stop-color="#999867"/><stop offset="0.541" stop-color="#99784f"/><stop offset="0.577" stop-color="#995f3c"/><stop offset="0.673" stop-color="#99381f"/><stop offset="0.842" stop-color="#991707"/><stop offset="0.998" stop-color="#990800"/></linearGradient><linearGradient id="c157" x1="0" x2="1" y1="0" y2="0"><stop offset="0.003" stop-color="#00ffbe"/><stop offset="0.013" stop-color="#01ffbd"/><stop offset="0.037" stop-color="#14ffbc"/><stop offset="0.138" stop-color="#67ffb7"/><stop offset="0.207" stop-color="#a9ffb2"/><stop offset="0.287" stop-color="#fffdab"/><stop offset="0.338" stop-color="#ffcc86"/><stop offset="0.393" stop-color="#ffa569"/><stop offset="0.458" stop-color="#ff8350"/><stop offset="0.532" stop-color="#ff663b"/><stop offset="0.623" stop-color="#ff4d28"/><stop offset="0.728" stop-color="#ff3818"/><stop offset="0.998" stop-color="#ff1500"/></linearGradient><linearGradient id="c158" x1="0" x2="1" y1="0" y2="0"><stop offset="0.001" stop-color="#009980"/><stop offset="0.336" stop-color="#009976"/><stop offset="0.416" stop-color="#439971"/><stop offset="0.500" stop-color="#99966a"/><stop offset="0.533" stop-color="#997652"/><stop offset="0.569" stop-color="#995e3f"/><stop offset="0.613" stop-color="#99482e"/><stop offset="0.667" stop-color="#993620"/><stop offset="0.837" stop-color="#991507"/><stop offset="0.999" stop-color="#990600"/></linearGradient><linearGradient id="c159" x1="0" x2="1" y1="0" y2="0"><stop offset="0.002" stop-color="#00ffc4"/><stop offset="0.047" stop-color="#1fffc2"/><stop offset="0.131" stop-color="#67ffbe"/><stop offset="0.204" stop-color="#b0ffb9"/><stop offset="0.273" stop-color="#feffb5"/><stop offset="0.278" stop-color="#fffab1"/><stop offset="0.328" stop-color="#ffc98b"/><stop offset="0.382" stop-color="#ffa26d"/><stop offset="0.446" stop-color="#ff8153"/><stop offset="0.525" stop-color="#ff623c"/><stop offset="0.613" stop-color="#ff4a29"/><stop offset="0.722" stop-color="#ff3419"/><stop offset="0.998" stop-color="#ff1300"/></linearGradient><linearGradient id="c160" x1="0" x2="1" y1="0" y2="0"><stop offset="0.001" stop-color="#009983"/><stop offset="0.329" stop-color="#00997a"/><stop offset="0.412" stop-color="#469976"/><stop offset="0.490" stop-color="#999871"/><stop offset="0.519" stop-color="#997a59"/><stop offset="0.558" stop-color="#995e43"/><stop offset="0.603" stop-color="#994831"/><stop offset="0.656" stop-color="#993522"/><stop offset="0.826" stop-color="#991509"/><stop offset="0.999" stop-color="#990500"/></linearGradient><linearGradient id="c161" x1="0" x2="1" y1="0" y2="0"><stop offset="0.002" stop-color="#00ffcb"/><stop offset="0.012" stop-color="#03ffca"/><stop offset="0.041" stop-color="#1affc9"/><stop offset="0.128" stop-color="#67ffc5"/><stop offset="0.196" stop-color="#acffc1"/><stop offset="0.268" stop-color="#fffdbc"/><stop offset="0.316" stop-color="#ffcb94"/><stop offset="0.370" stop-color="#ffa374"/><stop offset="0.437" stop-color="#ff7e57"/><stop offset="0.514" stop-color="#ff613f"/><stop offset="0.606" stop-color="#ff472b"/><stop offset="0.717" stop-color="#ff311a"/><stop offset="0.998" stop-color="#ff1000"/></linearGradient><linearGradient id="c162" x1="0" x2="1" y1="0" y2="0"><stop offset="0.001" stop-color="#009986"/><stop offset="0.323" stop-color="#00997e"/><stop offset="0.400" stop-color="#41997b"/><stop offset="0.482" stop-color="#999674"/><stop offset="0.512" stop-color="#99785c"/><stop offset="0.550" stop-color="#995d45"/><stop offset="0.594" stop-color="#994733"/><stop offset="0.650" stop-color="#993323"/><stop offset="0.819" stop-color="#991409"/><stop offset="0.999" stop-color="#990300"/></linearGradient><linearGradient id="c163" x1="0" x2="1" y1="0" y2="0"><stop offset="0.002" stop-color="#00ffd2"/><stop offset="0.012" stop-color="#02ffd1"/><stop offset="0.031" stop-color="#11ffd1"/><stop offset="0.121" stop-color="#63ffcd"/><stop offset="0.192" stop-color="#adffca"/><stop offset="0.258" stop-color="#fdffc6"/><stop offset="0.263" stop-color="#fffbc2"/><stop offset="0.310" stop-color="#ffc899"/><stop offset="0.367" stop-color="#ff9d76"/><stop offset="0.434" stop-color="#ff7a58"/><stop offset="0.509" stop-color="#ff5d41"/><stop offset="0.604" stop-color="#ff432b"/><stop offset="0.713" stop-color="#ff2e1a"/><stop offset="0.998" stop-color="#ff0d00"/></linearGradient><linearGradient id="c164" x1="0" x2="1" y1="0" y2="0"><stop offset="0.001" stop-color="#009989"/><stop offset="0.321" stop-color="#009982"/><stop offset="0.400" stop-color="#47997f"/><stop offset="0.474" stop-color="#99987b"/><stop offset="0.506" stop-color="#99765f"/><stop offset="0.544" stop-color="#995b48"/><stop offset="0.588" stop-color="#994535"/><stop offset="0.644" stop-color="#993225"/><stop offset="0.814" stop-color="#99130a"/><stop offset="0.999" stop-color="#990200"/></linearGradient><linearGradient id="c165" x1="0" x2="1" y1="0" y2="0"><stop offset="0.002" stop-color="#00ffd9"/><stop offset="0.049" stop-color="#25ffd7"/><stop offset="0.124" stop-color="#6cffd4"/><stop offset="0.185" stop-color="#afffd2"/><stop offset="0.250" stop-color="#fffece"/><stop offset="0.297" stop-color="#ffcaa2"/><stop offset="0.353" stop-color="#ff9e7c"/><stop offset="0.418" stop-color="#ff7a5e"/><stop offset="0.498" stop-color="#ff5b44"/><stop offset="0.591" stop-color="#ff412e"/><stop offset="0.703" stop-color="#ff2c1b"/><stop offset="0.998" stop-color="#ff0a00"/></linearGradient><linearGradient id="c166" x1="0" x2="1" y1="0" y2="0"><stop offset="0.001" stop-color="#00998c"/><stop offset="0.313" stop-color="#009986"/><stop offset="0.386" stop-color="#419984"/><stop offset="0.465" stop-color="#99967f"/><stop offset="0.497" stop-color="#997562"/><stop offset="0.535" stop-color="#995a4a"/><stop offset="0.579" stop-color="#994437"/><stop offset="0.634" stop-color="#993126"/><stop offset="0.806" stop-color="#99110b"/><stop offset="0.934" stop-color="#990500"/><stop offset="0.999" stop-color="#990100"/></linearGradient><linearGradient id="c167" x1="0" x2="1" y1="0" y2="0"><stop offset="0.002" stop-color="#00ffe0"/><stop offset="0.011" stop-color="#03ffe0"/><stop offset="0.034" stop-color="#17ffdf"/><stop offset="0.112" stop-color="#63ffdd"/><stop offset="0.176" stop-color="#abffdb"/><stop offset="0.240" stop-color="#fdffd8"/><stop offset="0.244" stop-color="#fffbd4"/><stop offset="0.290" stop-color="#ffc7a7"/><stop offset="0.345" stop-color="#ff9b81"/><stop offset="0.413" stop-color="#ff765f"/><stop offset="0.491" stop-color="#ff5845"/><stop offset="0.587" stop-color="#ff3e2e"/><stop offset="0.701" stop-color="#ff281b"/><stop offset="0.998" stop-color="#ff0700"/></linearGradient><linearGradient id="c168" x1="0" x2="1" y1="0" y2="0"><stop offset="0.001" stop-color="#00998f"/><stop offset="0.309" stop-color="#00998b"/><stop offset="0.384" stop-color="#449989"/><stop offset="0.457" stop-color="#999887"/><stop offset="0.488" stop-color="#997667"/><stop offset="0.526" stop-color="#995a4e"/><stop offset="0.572" stop-color="#994339"/><stop offset="0.628" stop-color="#993028"/><stop offset="0.799" stop-color="#99110c"/><stop offset="0.938" stop-color="#990400"/><stop offset="0.999" stop-color="#990000"/></linearGradient><linearGradient id="c169" x1="0" x2="1" y1="0" y2="0"><stop offset="0.002" stop-color="#00ffe8"/><stop offset="0.011" stop-color="#02ffe7"/><stop offset="0.029" stop-color="#12ffe7"/><stop offset="0.114" stop-color="#68ffe5"/><stop offset="0.173" stop-color="#acffe4"/><stop offset="0.235" stop-color="#fffee1"/><stop offset="0.280" stop-color="#ffc9b0"/><stop offset="0.334" stop-color="#ff9c88"/><stop offset="0.401" stop-color="#ff7565"/><stop offset="0.482" stop-color="#ff5648"/><stop offset="0.576" stop-color="#ff3c31"/><stop offset="0.693" stop-color="#ff261d"/><stop offset="0.998" stop-color="#ff0500"/></linearGradient><linearGradient id="c170" x1="0" x2="1" y1="0" y2="0"><stop offset="0.001" stop-color="#009992"/><stop offset="0.304" stop-color="#009990"/><stop offset="0.376" stop-color="#45998f"/><stop offset="0.448" stop-color="#99978b"/><stop offset="0.480" stop-color="#99746b"/><stop offset="0.517" stop-color="#995851"/><stop offset="0.563" stop-color="#99413b"/><stop offset="0.621" stop-color="#992e29"/><stop offset="0.794" stop-color="#990f0c"/><stop offset="0.938" stop-color="#990200"/><stop offset="0.999" stop-color="#990000"/></linearGradient><linearGradient id="c171" x1="0" x2="1" y1="0" y2="0"><stop offset="0.002" stop-color="#00ffef"/><stop offset="0.042" stop-color="#22ffef"/><stop offset="0.108" stop-color="#68ffee"/><stop offset="0.166" stop-color="#adffed"/><stop offset="0.223" stop-color="#fdffec"/><stop offset="0.228" stop-color="#fffbe8"/><stop offset="0.272" stop-color="#ffc6b6"/><stop offset="0.330" stop-color="#ff9689"/><stop offset="0.396" stop-color="#ff7166"/><stop offset="0.476" stop-color="#ff5249"/><stop offset="0.573" stop-color="#ff3831"/><stop offset="0.688" stop-color="#ff231d"/><stop offset="0.998" stop-color="#ff0300"/></linearGradient><linearGradient id="c172" x1="0" x2="1" y1="0" y2="0"><stop offset="0.001" stop-color="#009995"/><stop offset="0.299" stop-color="#009994"/><stop offset="0.371" stop-color="#459994"/><stop offset="0.440" stop-color="#999993"/><stop offset="0.471" stop-color="#997571"/><stop offset="0.509" stop-color="#995955"/><stop offset="0.557" stop-color="#99403d"/><stop offset="0.615" stop-color="#992d2b"/><stop offset="0.787" stop-color="#990e0d"/><stop offset="0.999" stop-color="#990000"/></linearGradient><linearGradient id="c173" x1="0" x2="1" y1="0" y2="0"><stop offset="0.002" stop-color="#00fff7"/><stop offset="0.011" stop-color="#03fff7"/><stop offset="0.033" stop-color="#19fff7"/><stop offset="0.107" stop-color="#68fff7"/><stop offset="0.163" stop-color="#affff6"/><stop offset="0.220" stop-color="#fffef5"/><stop offset="0.263" stop-color="#ffc7c0"/><stop offset="0.320" stop-color="#ff9791"/><stop offset="0.385" stop-color="#ff716c"/><stop offset="0.467" stop-color="#ff504c"/><stop offset="0.567" stop-color="#ff3632"/><stop offset="0.689" stop-color="#ff201d"/><stop offset="0.998" stop-color="#ff0000"/></linearGradient><linearGradient id="c174" x1="0" x2="1" y1="0" y2="0"><stop offset="0.001" stop-color="#009999"/><stop offset="0.292" stop-color="#009999"/><stop offset="0.360" stop-color="#429899"/><stop offset="0.432" stop-color="#999798"/><stop offset="0.463" stop-color="#997374"/><stop offset="0.503" stop-color="#995556"/><stop offset="0.551" stop-color="#993e3e"/><stop offset="0.608" stop-color="#992b2b"/><stop offset="0.785" stop-color="#990d0d"/><stop offset="0.933" stop-color="#990001"/><stop offset="0.999" stop-color="#990000"/></linearGradient><linearGradient id="c175" x1="0" x2="1" y1="0" y2="0"><stop offset="0.002" stop-color="#00feff"/><stop offset="0.011" stop-color="#02feff"/><stop offset="0.024" stop-color="#0ffeff"/><stop offset="0.102" stop-color="#63feff"/><stop offset="0.154" stop-color="#a4feff"/><stop offset="0.219" stop-color="#fffbfd"/><stop offset="0.262" stop-color="#ffc4c6"/><stop offset="0.318" stop-color="#ff9495"/><stop offset="0.383" stop-color="#ff6f70"/><stop offset="0.465" stop-color="#ff4e4f"/><stop offset="0.565" stop-color="#ff3435"/><stop offset="0.686" stop-color="#ff1e1f"/><stop offset="0.998" stop-color="#ff0000"/></linearGradient><linearGradient id="c176" x1="0" x2="1" y1="0" y2="0"><stop offset="0.001" stop-color="#009699"/><stop offset="0.290" stop-color="#009499"/><stop offset="0.361" stop-color="#469399"/><stop offset="0.429" stop-color="#999198"/><stop offset="0.460" stop-color="#996f75"/><stop offset="0.500" stop-color="#995257"/><stop offset="0.548" stop-color="#993b3f"/><stop offset="0.608" stop-color="#99282c"/><stop offset="0.690" stop-color="#99181a"/><stop offset="0.792" stop-color="#990a0d"/><stop offset="0.916" stop-color="#990002"/><stop offset="0.999" stop-color="#990000"/></linearGradient><linearGradient id="c177" x1="0" x2="1" y1="0" y2="0"><stop offset="0.002" stop-color="#00f6ff"/><stop offset="0.042" stop-color="#23f6ff"/><stop offset="0.108" stop-color="#6af5ff"/><stop offset="0.161" stop-color="#aaf4ff"/><stop offset="0.222" stop-color="#fff2fd"/><stop offset="0.267" stop-color="#ffbdc7"/><stop offset="0.324" stop-color="#ff8f97"/><stop offset="0.390" stop-color="#ff6a71"/><stop offset="0.469" stop-color="#ff4c52"/><stop offset="0.566" stop-color="#ff3338"/><stop offset="0.685" stop-color="#ff1e22"/><stop offset="0.998" stop-color="#ff0002"/></linearGradient><linearGradient id="c178" x1="0" x2="1" y1="0" y2="0"><stop offset="0.001" stop-color="#009299"/><stop offset="0.284" stop-color="#008f99"/><stop offset="0.357" stop-color="#468d99"/><stop offset="0.425" stop-color="#998b98"/><stop offset="0.456" stop-color="#996b75"/><stop offset="0.496" stop-color="#994f58"/><stop offset="0.544" stop-color="#993940"/><stop offset="0.603" stop-color="#99262c"/><stop offset="0.688" stop-color="#99161b"/><stop offset="0.795" stop-color="#99080c"/><stop offset="0.900" stop-color="#990003"/><stop offset="0.999" stop-color="#990000"/></linearGradient><linearGradient id="c179" x1="0" x2="1" y1="0" y2="0"><stop offset="0.002" stop-color="#00eeff"/><stop offset="0.011" stop-color="#03eeff"/><stop offset="0.038" stop-color="#1ceeff"/><stop offset="0.114" stop-color="#6becff"/><stop offset="0.172" stop-color="#b1ebff"/><stop offset="0.230" stop-color="#ffe8fe"/><stop offset="0.275" stop-color="#ffb6c8"/><stop offset="0.328" stop-color="#ff8c9b"/><stop offset="0.395" stop-color="#ff6875"/><stop offset="0.475" stop-color="#ff4a55"/><stop offset="0.574" stop-color="#ff313a"/><stop offset="0.690" stop-color="#ff1d25"/><stop offset="0.998" stop-color="#ff0004"/></linearGradient><linearGradient id="c180" x1="0" x2="1" y1="0" y2="0"><stop offset="0.001" stop-color="#008f99"/><stop offset="0.279" stop-color="#008a99"/><stop offset="0.352" stop-color="#448899"/><stop offset="0.422" stop-color="#998699"/><stop offset="0.455" stop-color="#996474"/><stop offset="0.494" stop-color="#994a57"/><stop offset="0.542" stop-color="#993540"/><stop offset="0.601" stop-color="#99242d"/><stop offset="0.690" stop-color="#99131a"/><stop offset="0.805" stop-color="#99060b"/><stop offset="0.878" stop-color="#990005"/><stop offset="0.999" stop-color="#990000"/></linearGradient><linearGradient id="c181" x1="0" x2="1" y1="0" y2="0"><stop offset="0.002" stop-color="#00e6ff"/><stop offset="0.011" stop-color="#02e6ff"/><stop offset="0.029" stop-color="#12e6ff"/><stop offset="0.115" stop-color="#68e3ff"/><stop offset="0.179" stop-color="#b1e1ff"/><stop offset="0.238" stop-color="#ffdfff"/><stop offset="0.283" stop-color="#ffafc9"/><stop offset="0.337" stop-color="#ff869d"/><stop offset="0.405" stop-color="#ff6476"/><stop offset="0.486" stop-color="#ff4756"/><stop offset="0.581" stop-color="#ff303d"/><stop offset="0.695" stop-color="#ff1c27"/><stop offset="0.998" stop-color="#ff0006"/></linearGradient><linearGradient id="c182" x1="0" x2="1" y1="0" y2="0"><stop offset="0.001" stop-color="#008c99"/><stop offset="0.275" stop-color="#008699"/><stop offset="0.351" stop-color="#488399"/><stop offset="0.418" stop-color="#998099"/><stop offset="0.451" stop-color="#996074"/><stop offset="0.490" stop-color="#994758"/><stop offset="0.541" stop-color="#993240"/><stop offset="0.599" stop-color="#99212d"/><stop offset="0.694" stop-color="#991119"/><stop offset="0.814" stop-color="#99040b"/><stop offset="0.999" stop-color="#990000"/></linearGradient><linearGradient id="c183" x1="0" x2="1" y1="0" y2="0"><stop offset="0.002" stop-color="#00dfff"/><stop offset="0.012" stop-color="#01dfff"/><stop offset="0.025" stop-color="#0ddeff"/><stop offset="0.118" stop-color="#65dbff"/><stop offset="0.182" stop-color="#acd9ff"/><stop offset="0.247" stop-color="#fed6ff"/><stop offset="0.293" stop-color="#ffa8cb"/><stop offset="0.348" stop-color="#ff819e"/><stop offset="0.417" stop-color="#ff5f78"/><stop offset="0.495" stop-color="#ff4559"/><stop offset="0.592" stop-color="#ff2e3f"/><stop offset="0.703" stop-color="#ff1c2a"/><stop offset="0.998" stop-color="#ff0009"/></linearGradient><linearGradient id="c184" x1="0" x2="1" y1="0" y2="0"><stop offset="0.001" stop-color="#008899"/><stop offset="0.270" stop-color="#008199"/><stop offset="0.342" stop-color="#437e99"/><stop offset="0.417" stop-color="#997896"/><stop offset="0.450" stop-color="#995a73"/><stop offset="0.489" stop-color="#994357"/><stop offset="0.539" stop-color="#992f3f"/><stop offset="0.600" stop-color="#991e2c"/><stop offset="0.699" stop-color="#990e18"/><stop offset="0.827" stop-color="#990109"/><stop offset="0.999" stop-color="#990000"/></linearGradient><linearGradient id="c185" x1="0" x2="1" y1="0" y2="0"><stop offset="0.002" stop-color="#00d8ff"/><stop offset="0.040" stop-color="#1bd6ff"/><stop offset="0.120" stop-color="#66d3ff"/><stop offset="0.185" stop-color="#add0ff"/><stop offset="0.251" stop-color="#feccff"/><stop offset="0.256" stop-color="#ffc8fa"/><stop offset="0.303" stop-color="#ff9dc7"/><stop offset="0.359" stop-color="#ff799d"/><stop offset="0.425" stop-color="#ff5b79"/><stop offset="0.505" stop-color="#ff415b"/><stop offset="0.599" stop-color="#ff2c41"/><stop offset="0.711" stop-color="#ff1a2c"/><stop offset="0.998" stop-color="#ff000c"/></linearGradient><linearGradient id="c186" x1="0" x2="1" y1="0" y2="0"><stop offset="0.001" stop-color="#008599"/><stop offset="0.264" stop-color="#007d99"/><stop offset="0.336" stop-color="#417a99"/><stop offset="0.413" stop-color="#997397"/><stop offset="0.446" stop-color="#995773"/><stop offset="0.488" stop-color="#993f56"/><stop offset="0.537" stop-color="#992c3f"/><stop offset="0.598" stop-color="#991c2c"/><stop offset="0.698" stop-color="#990c19"/><stop offset="0.825" stop-color="#99000a"/><stop offset="0.999" stop-color="#990000"/></linearGradient><linearGradient id="c187" x1="0" x2="1" y1="0" y2="0"><stop offset="0.002" stop-color="#00d1ff"/><stop offset="0.012" stop-color="#02d0ff"/><stop offset="0.031" stop-color="#12d0ff"/><stop offset="0.122" stop-color="#63cbff"/><stop offset="0.194" stop-color="#adc8ff"/><stop offset="0.261" stop-color="#fdc3ff"/><stop offset="0.266" stop-color="#ffc0fb"/><stop offset="0.313" stop-color="#ff97c9"/><stop offset="0.371" stop-color="#ff749e"/><stop offset="0.438" stop-color="#ff577b"/><stop offset="0.514" stop-color="#ff3f5e"/><stop offset="0.605" stop-color="#ff2b45"/><stop offset="0.715" stop-color="#ff1a30"/><stop offset="0.998" stop-color="#ff000e"/></linearGradient><linearGradient id="c188" x1="0" x2="1" y1="0" y2="0"><stop offset="0.001" stop-color="#008299"/><stop offset="0.262" stop-color="#007999"/><stop offset="0.336" stop-color="#457599"/><stop offset="0.410" stop-color="#996e97"/><stop offset="0.442" stop-color="#995374"/><stop offset="0.484" stop-color="#993c57"/><stop offset="0.533" stop-color="#992a40"/><stop offset="0.596" stop-color="#991a2c"/><stop offset="0.686" stop-color="#990c1a"/><stop offset="0.804" stop-color="#99000c"/><stop offset="0.999" stop-color="#990000"/></linearGradient><linearGradient id="c189" x1="0" x2="1" y1="0" y2="0"><stop offset="0.002" stop-color="#00caff"/><stop offset="0.012" stop-color="#01c9ff"/><stop offset="0.027" stop-color="#0cc9ff"/><stop offset="0.124" stop-color="#60c4ff"/><stop offset="0.192" stop-color="#a3c0ff"/><stop offset="0.274" stop-color="#ffb8fc"/><stop offset="0.323" stop-color="#ff91ca"/><stop offset="0.376" stop-color="#ff71a2"/><stop offset="0.444" stop-color="#ff557e"/><stop offset="0.522" stop-color="#ff3d61"/><stop offset="0.614" stop-color="#ff2947"/><stop offset="0.721" stop-color="#ff1932"/><stop offset="0.998" stop-color="#ff0011"/></linearGradient><linearGradient id="c190" x1="0" x2="1" y1="0" y2="0"><stop offset="0.001" stop-color="#007f99"/><stop offset="0.255" stop-color="#007599"/><stop offset="0.332" stop-color="#457099"/><stop offset="0.406" stop-color="#996a97"/><stop offset="0.439" stop-color="#994f75"/><stop offset="0.480" stop-color="#993958"/><stop offset="0.529" stop-color="#992741"/><stop offset="0.592" stop-color="#99182d"/><stop offset="0.679" stop-color="#990b1b"/><stop offset="0.788" stop-color="#99000d"/><stop offset="0.999" stop-color="#990000"/></linearGradient><linearGradient id="c191" x1="0" x2="1" y1="0" y2="0"><stop offset="0.002" stop-color="#00c3ff"/><stop offset="0.047" stop-color="#1ec1ff"/><stop offset="0.137" stop-color="#6abcff"/><stop offset="0.201" stop-color="#a9b8ff"/><stop offset="0.281" stop-color="#ffb0fc"/><stop offset="0.331" stop-color="#ff8acb"/><stop offset="0.386" stop-color="#ff6ca4"/><stop offset="0.450" stop-color="#ff5282"/><stop offset="0.530" stop-color="#ff3b64"/><stop offset="0.619" stop-color="#ff294b"/><stop offset="0.729" stop-color="#ff1835"/><stop offset="0.998" stop-color="#ff0014"/></linearGradient><linearGradient id="c192" x1="0" x2="1" y1="0" y2="0"><stop offset="0.001" stop-color="#007c99"/><stop offset="0.251" stop-color="#007199"/><stop offset="0.327" stop-color="#436c99"/><stop offset="0.402" stop-color="#996598"/><stop offset="0.438" stop-color="#994a73"/><stop offset="0.478" stop-color="#993557"/><stop offset="0.527" stop-color="#992541"/><stop offset="0.589" stop-color="#99162d"/><stop offset="0.771" stop-color="#99000f"/><stop offset="0.999" stop-color="#990000"/></linearGradient><linearGradient id="c193" x1="0" x2="1" y1="0" y2="0"><stop offset="0.003" stop-color="#00bdff"/><stop offset="0.013" stop-color="#02bcff"/><stop offset="0.043" stop-color="#19bbff"/><stop offset="0.139" stop-color="#67b5ff"/><stop offset="0.210" stop-color="#aab0ff"/><stop offset="0.290" stop-color="#ffa8fd"/><stop offset="0.341" stop-color="#ff84cc"/><stop offset="0.396" stop-color="#ff67a5"/><stop offset="0.462" stop-color="#ff4e83"/><stop offset="0.538" stop-color="#ff3966"/><stop offset="0.629" stop-color="#ff274d"/><stop offset="0.730" stop-color="#ff1839"/><stop offset="0.997" stop-color="#ff0017"/></linearGradient><linearGradient id="c194" x1="0" x2="1" y1="0" y2="0"><stop offset="0.001" stop-color="#007999"/><stop offset="0.247" stop-color="#016d99"/><stop offset="0.326" stop-color="#476899"/><stop offset="0.399" stop-color="#996198"/><stop offset="0.434" stop-color="#994774"/><stop offset="0.474" stop-color="#993358"/><stop offset="0.526" stop-color="#992240"/><stop offset="0.588" stop-color="#99142d"/><stop offset="0.753" stop-color="#990011"/><stop offset="0.999" stop-color="#990000"/></linearGradient><linearGradient id="c195" x1="0" x2="1" y1="0" y2="0"><stop offset="0.003" stop-color="#00b7ff"/><stop offset="0.013" stop-color="#01b6ff"/><stop offset="0.033" stop-color="#10b5ff"/><stop offset="0.141" stop-color="#64aeff"/><stop offset="0.218" stop-color="#aaa9ff"/><stop offset="0.300" stop-color="#ffa1fe"/><stop offset="0.346" stop-color="#ff81d1"/><stop offset="0.403" stop-color="#ff65a9"/><stop offset="0.469" stop-color="#ff4c87"/><stop offset="0.546" stop-color="#ff3769"/><stop offset="0.736" stop-color="#ff173c"/><stop offset="0.997" stop-color="#ff001a"/></linearGradient><linearGradient id="c196" x1="0" x2="1" y1="0" y2="0"><stop offset="0.001" stop-color="#007699"/><stop offset="0.243" stop-color="#006a99"/><stop offset="0.324" stop-color="#486399"/><stop offset="0.397" stop-color="#995c99"/><stop offset="0.431" stop-color="#994375"/><stop offset="0.472" stop-color="#993059"/><stop offset="0.523" stop-color="#992041"/><stop offset="0.585" stop-color="#99132e"/><stop offset="0.738" stop-color="#990013"/><stop offset="0.999" stop-color="#990000"/></linearGradient><linearGradient id="c197" x1="0" x2="1" y1="0" y2="0"><stop offset="0.003" stop-color="#00b0ff"/><stop offset="0.061" stop-color="#24adff"/><stop offset="0.155" stop-color="#6ea7ff"/><stop offset="0.229" stop-color="#b0a1ff"/><stop offset="0.308" stop-color="#ff9afe"/><stop offset="0.355" stop-color="#ff7bd2"/><stop offset="0.413" stop-color="#ff60aa"/><stop offset="0.476" stop-color="#ff4a8a"/><stop offset="0.555" stop-color="#ff356c"/><stop offset="0.745" stop-color="#ff163f"/><stop offset="0.997" stop-color="#ff001d"/></linearGradient><linearGradient id="c198" x1="0" x2="1" y1="0" y2="0"><stop offset="0.001" stop-color="#007399"/><stop offset="0.237" stop-color="#006699"/><stop offset="0.317" stop-color="#466099"/><stop offset="0.392" stop-color="#995899"/><stop offset="0.426" stop-color="#994075"/><stop offset="0.467" stop-color="#992e5a"/><stop offset="0.517" stop-color="#991e42"/><stop offset="0.582" stop-color="#99112e"/><stop offset="0.721" stop-color="#990015"/><stop offset="0.999" stop-color="#990000"/></linearGradient><linearGradient id="c199" x1="0" x2="1" y1="0" y2="0"><stop offset="0.003" stop-color="#00aaff"/><stop offset="0.013" stop-color="#02aaff"/><stop offset="0.051" stop-color="#1ba8ff"/><stop offset="0.158" stop-color="#6ba0ff"/><stop offset="0.238" stop-color="#b09aff"/><stop offset="0.318" stop-color="#ff93ff"/><stop offset="0.366" stop-color="#ff76d3"/><stop offset="0.425" stop-color="#ff5bac"/><stop offset="0.489" stop-color="#ff468c"/><stop offset="0.564" stop-color="#ff336f"/><stop offset="0.751" stop-color="#ff1542"/><stop offset="0.997" stop-color="#ff0021"/></linearGradient><linearGradient id="c200" x1="0" x2="1" y1="0" y2="0"><stop offset="0.001" stop-color="#007099"/><stop offset="0.235" stop-color="#016299"/><stop offset="0.318" stop-color="#495b99"/><stop offset="0.390" stop-color="#995499"/><stop offset="0.424" stop-color="#993d76"/><stop offset="0.467" stop-color="#992a59"/><stop offset="0.517" stop-color="#991b42"/><stop offset="0.581" stop-color="#990f2e"/><stop offset="0.703" stop-color="#990017"/><stop offset="0.852" stop-color="#990008"/><stop offset="0.999" stop-color="#990000"/></linearGradient><linearGradient id="c201" x1="0" x2="1" y1="0" y2="0"><stop offset="0.003" stop-color="#00a5ff"/><stop offset="0.014" stop-color="#01a4ff"/><stop offset="0.046" stop-color="#16a2ff"/><stop offset="0.161" stop-color="#689aff"/><stop offset="0.249" stop-color="#b193ff"/><stop offset="0.331" stop-color="#fe8bff"/><stop offset="0.380" stop-color="#ff70d4"/><stop offset="0.434" stop-color="#ff58b0"/><stop offset="0.500" stop-color="#ff438f"/><stop offset="0.571" stop-color="#ff3274"/><stop offset="0.757" stop-color="#ff1446"/><stop offset="0.997" stop-color="#ff0024"/></linearGradient><linearGradient id="c202" x1="0" x2="1" y1="0" y2="0"><stop offset="0.001" stop-color="#006d99"/><stop offset="0.229" stop-color="#005f99"/><stop offset="0.309" stop-color="#445899"/><stop offset="0.389" stop-color="#994e97"/><stop offset="0.423" stop-color="#993974"/><stop offset="0.466" stop-color="#992758"/><stop offset="0.516" stop-color="#991941"/><stop offset="0.580" stop-color="#990d2e"/><stop offset="0.686" stop-color="#99001a"/><stop offset="0.757" stop-color="#990011"/><stop offset="0.999" stop-color="#990000"/></linearGradient><linearGradient id="c203" x1="0" x2="1" y1="0" y2="0"><stop offset="0.003" stop-color="#009fff"/><stop offset="0.064" stop-color="#239bff"/><stop offset="0.170" stop-color="#6e93ff"/><stop offset="0.254" stop-color="#b18cff"/><stop offset="0.338" stop-color="#fe84ff"/><stop offset="0.388" stop-color="#ff6ad5"/><stop offset="0.444" stop-color="#ff54b1"/><stop offset="0.506" stop-color="#ff4193"/><stop offset="0.578" stop-color="#ff3077"/><stop offset="0.757" stop-color="#ff144b"/><stop offset="0.997" stop-color="#ff0028"/></linearGradient><linearGradient id="c204" x1="0" x2="1" y1="0" y2="0"><stop offset="0.001" stop-color="#006a99"/><stop offset="0.227" stop-color="#005c99"/><stop offset="0.307" stop-color="#435599"/><stop offset="0.390" stop-color="#994a97"/><stop offset="0.425" stop-color="#993675"/><stop offset="0.468" stop-color="#992559"/><stop offset="0.519" stop-color="#991742"/><stop offset="0.583" stop-color="#990b2f"/><stop offset="0.680" stop-color="#99001c"/><stop offset="0.755" stop-color="#990012"/><stop offset="0.999" stop-color="#990000"/></linearGradient><linearGradient id="c205" x1="0" x2="1" y1="0" y2="0"><stop offset="0.003" stop-color="#009aff"/><stop offset="0.014" stop-color="#0299ff"/><stop offset="0.054" stop-color="#1a96ff"/><stop offset="0.169" stop-color="#678eff"/><stop offset="0.249" stop-color="#a487ff"/><stop offset="0.357" stop-color="#ff7bfc"/><stop offset="0.403" stop-color="#ff65d6"/><stop offset="0.460" stop-color="#ff4fb2"/><stop offset="0.523" stop-color="#ff3d94"/><stop offset="0.597" stop-color="#ff2d79"/><stop offset="0.769" stop-color="#ff134e"/><stop offset="0.997" stop-color="#ff002c"/></linearGradient><linearGradient id="c206" x1="0" x2="1" y1="0" y2="0"><stop offset="0.001" stop-color="#006799"/><stop offset="0.230" stop-color="#015999"/><stop offset="0.314" stop-color="#465199"/><stop offset="0.395" stop-color="#994697"/><stop offset="0.431" stop-color="#993376"/><stop offset="0.471" stop-color="#99235b"/><stop offset="0.523" stop-color="#991644"/><stop offset="0.586" stop-color="#990b31"/><stop offset="0.678" stop-color="#99001e"/><stop offset="0.754" stop-color="#990014"/><stop offset="0.999" stop-color="#990001"/></linearGradient><linearGradient id="c207" x1="0" x2="1" y1="0" y2="0"><stop offset="0.003" stop-color="#0094ff"/><stop offset="0.015" stop-color="#0194ff"/><stop offset="0.044" stop-color="#1292ff"/><stop offset="0.172" stop-color="#6488ff"/><stop offset="0.259" stop-color="#a481ff"/><stop offset="0.369" stop-color="#ff75fc"/><stop offset="0.416" stop-color="#ff5fd7"/><stop offset="0.474" stop-color="#ff4bb3"/><stop offset="0.538" stop-color="#ff3995"/><stop offset="0.608" stop-color="#ff2a7c"/><stop offset="0.776" stop-color="#ff1251"/><stop offset="0.997" stop-color="#ff0030"/></linearGradient><linearGradient id="c208" x1="0" x2="1" y1="0" y2="0"><stop offset="0.001" stop-color="#006599"/><stop offset="0.229" stop-color="#005699"/><stop offset="0.317" stop-color="#464d99"/><stop offset="0.400" stop-color="#994298"/><stop offset="0.436" stop-color="#993076"/><stop offset="0.478" stop-color="#99215c"/><stop offset="0.530" stop-color="#991445"/><stop offset="0.591" stop-color="#990a32"/><stop offset="0.675" stop-color="#990021"/><stop offset="0.758" stop-color="#990016"/><stop offset="0.999" stop-color="#990002"/></linearGradient><linearGradient id="c209" x1="0" x2="1" y1="0" y2="0"><stop offset="0.003" stop-color="#008fff"/><stop offset="0.074" stop-color="#258aff"/><stop offset="0.188" stop-color="#6d81ff"/><stop offset="0.277" stop-color="#ae7aff"/><stop offset="0.378" stop-color="#ff6ffd"/><stop offset="0.426" stop-color="#ff5ad8"/><stop offset="0.479" stop-color="#ff48b8"/><stop offset="0.610" stop-color="#ff2981"/><stop offset="0.777" stop-color="#ff1156"/><stop offset="0.997" stop-color="#ff0034"/></linearGradient><linearGradient id="c210" x1="0" x2="1" y1="0" y2="0"><stop offset="0.001" stop-color="#006299"/><stop offset="0.229" stop-color="#005399"/><stop offset="0.319" stop-color="#454a99"/><stop offset="0.406" stop-color="#993f98"/><stop offset="0.442" stop-color="#992d77"/><stop offset="0.485" stop-color="#991f5c"/><stop offset="0.535" stop-color="#991346"/><stop offset="0.597" stop-color="#990934"/><stop offset="0.673" stop-color="#990024"/><stop offset="0.760" stop-color="#990017"/><stop offset="0.999" stop-color="#990003"/></linearGradient><linearGradient id="c211" x1="0" x2="1" y1="0" y2="0"><stop offset="0.003" stop-color="#008aff"/><stop offset="0.015" stop-color="#0289ff"/><stop offset="0.064" stop-color="#1d86ff"/><stop offset="0.192" stop-color="#6a7cff"/><stop offset="0.290" stop-color="#ae74ff"/><stop offset="0.393" stop-color="#ff69fd"/><stop offset="0.442" stop-color="#ff55d9"/><stop offset="0.497" stop-color="#ff44b9"/><stop offset="0.625" stop-color="#ff2784"/><stop offset="0.790" stop-color="#ff105a"/><stop offset="0.997" stop-color="#ff0038"/></linearGradient><linearGradient id="c212" x1="0" x2="1" y1="0" y2="0"><stop offset="0.001" stop-color="#005f99"/><stop offset="0.230" stop-color="#014f99"/><stop offset="0.324" stop-color="#484699"/><stop offset="0.410" stop-color="#993b98"/><stop offset="0.447" stop-color="#992a77"/><stop offset="0.490" stop-color="#991c5d"/><stop offset="0.541" stop-color="#991147"/><stop offset="0.601" stop-color="#990735"/><stop offset="0.670" stop-color="#990026"/><stop offset="0.764" stop-color="#990018"/><stop offset="0.999" stop-color="#990005"/></linearGradient><linearGradient id="c213" x1="0" x2="1" y1="0" y2="0"><stop offset="0.003" stop-color="#0085ff"/><stop offset="0.016" stop-color="#0184ff"/><stop offset="0.059" stop-color="#1881ff"/><stop offset="0.196" stop-color="#6877ff"/><stop offset="0.301" stop-color="#af6eff"/><stop offset="0.407" stop-color="#ff63fe"/><stop offset="0.457" stop-color="#ff50da"/><stop offset="0.506" stop-color="#ff41bd"/><stop offset="0.637" stop-color="#ff2587"/><stop offset="0.798" stop-color="#ff0f5d"/><stop offset="0.997" stop-color="#ff003d"/></linearGradient><linearGradient id="c214" x1="0" x2="1" y1="0" y2="0"><stop offset="0.001" stop-color="#005d99"/><stop offset="0.228" stop-color="#004d99"/><stop offset="0.327" stop-color="#484399"/><stop offset="0.414" stop-color="#993899"/><stop offset="0.449" stop-color="#99287a"/><stop offset="0.493" stop-color="#991b5f"/><stop offset="0.545" stop-color="#991049"/><stop offset="0.606" stop-color="#990636"/><stop offset="0.664" stop-color="#99002a"/><stop offset="0.769" stop-color="#99001a"/><stop offset="0.999" stop-color="#990006"/></linearGradient><linearGradient id="c215" x1="0" x2="1" y1="0" y2="0"><stop offset="0.003" stop-color="#0080ff"/><stop offset="0.087" stop-color="#277aff"/><stop offset="0.215" stop-color="#7170ff"/><stop offset="0.317" stop-color="#b467ff"/><stop offset="0.420" stop-color="#ff5dff"/><stop offset="0.471" stop-color="#ff4bdb"/><stop offset="0.522" stop-color="#ff3cbe"/><stop offset="0.644" stop-color="#ff248c"/><stop offset="0.798" stop-color="#ff0f64"/><stop offset="0.997" stop-color="#ff0042"/></linearGradient><linearGradient id="c216" x1="0" x2="1" y1="0" y2="0"><stop offset="0.001" stop-color="#005a99"/><stop offset="0.229" stop-color="#004a99"/><stop offset="0.329" stop-color="#474099"/><stop offset="0.420" stop-color="#993499"/><stop offset="0.456" stop-color="#99267b"/><stop offset="0.500" stop-color="#991960"/><stop offset="0.612" stop-color="#990538"/><stop offset="0.662" stop-color="#99002d"/><stop offset="0.771" stop-color="#99001b"/><stop offset="0.999" stop-color="#990007"/></linearGradient><linearGradient id="c217" x1="0" x2="1" y1="0" y2="0"><stop offset="0.003" stop-color="#007cff"/><stop offset="0.016" stop-color="#027bff"/><stop offset="0.082" stop-color="#2276ff"/><stop offset="0.219" stop-color="#6e6bff"/><stop offset="0.330" stop-color="#b462ff"/><stop offset="0.435" stop-color="#ff57ff"/><stop offset="0.533" stop-color="#ff3ac2"/><stop offset="0.657" stop-color="#ff2190"/><stop offset="0.807" stop-color="#ff0e68"/><stop offset="0.997" stop-color="#ff0047"/></linearGradient><linearGradient id="c218" x1="0" x2="1" y1="0" y2="0"><stop offset="0.002" stop-color="#005799"/><stop offset="0.230" stop-color="#014799"/><stop offset="0.333" stop-color="#473d99"/><stop offset="0.426" stop-color="#993199"/><stop offset="0.465" stop-color="#992279"/><stop offset="0.508" stop-color="#991761"/><stop offset="0.619" stop-color="#990439"/><stop offset="0.776" stop-color="#99001d"/><stop offset="0.998" stop-color="#990009"/></linearGradient><linearGradient id="c219" x1="0" x2="1" y1="0" y2="0"><stop offset="0.003" stop-color="#0077ff"/><stop offset="0.017" stop-color="#0176ff"/><stop offset="0.070" stop-color="#1a73ff"/><stop offset="0.225" stop-color="#6b67ff"/><stop offset="0.346" stop-color="#b45cff"/><stop offset="0.453" stop-color="#fe51ff"/><stop offset="0.554" stop-color="#ff35c3"/><stop offset="0.674" stop-color="#ff1f93"/><stop offset="0.822" stop-color="#ff0d6c"/><stop offset="0.997" stop-color="#ff004c"/></linearGradient><linearGradient id="c220" x1="0" x2="1" y1="0" y2="0"><stop offset="0.002" stop-color="#005599"/><stop offset="0.231" stop-color="#004499"/><stop offset="0.335" stop-color="#463a99"/><stop offset="0.436" stop-color="#992c97"/><stop offset="0.472" stop-color="#991f7a"/><stop offset="0.515" stop-color="#991461"/><stop offset="0.628" stop-color="#99033a"/><stop offset="0.784" stop-color="#99001e"/><stop offset="0.998" stop-color="#99000a"/></linearGradient><linearGradient id="c221" x1="0" x2="1" y1="0" y2="0"><stop offset="0.003" stop-color="#0072ff"/><stop offset="0.100" stop-color="#296cff"/><stop offset="0.238" stop-color="#7061ff"/><stop offset="0.355" stop-color="#b557ff"/><stop offset="0.466" stop-color="#fe4cff"/><stop offset="0.569" stop-color="#ff31c4"/><stop offset="0.686" stop-color="#ff1d96"/><stop offset="0.824" stop-color="#ff0c71"/><stop offset="0.997" stop-color="#ff0052"/></linearGradient><linearGradient id="c222" x1="0" x2="1" y1="0" y2="0"><stop offset="0.002" stop-color="#005299"/><stop offset="0.229" stop-color="#004299"/><stop offset="0.335" stop-color="#443799"/><stop offset="0.441" stop-color="#992997"/><stop offset="0.478" stop-color="#991d7a"/><stop offset="0.522" stop-color="#991262"/><stop offset="0.634" stop-color="#99023b"/><stop offset="0.787" stop-color="#990020"/><stop offset="0.998" stop-color="#99000c"/></linearGradient><linearGradient id="c223" x1="0" x2="1" y1="0" y2="0"><stop offset="0.004" stop-color="#006eff"/><stop offset="0.088" stop-color="#2168ff"/><stop offset="0.236" stop-color="#6a5dff"/><stop offset="0.349" stop-color="#a853ff"/><stop offset="0.489" stop-color="#ff45fc"/><stop offset="0.588" stop-color="#ff2dc5"/><stop offset="0.701" stop-color="#ff1a9a"/><stop offset="0.835" stop-color="#ff0b76"/><stop offset="0.996" stop-color="#ff0057"/></linearGradient><linearGradient id="c224" x1="0" x2="1" y1="0" y2="0"><stop offset="0.002" stop-color="#005099"/><stop offset="0.230" stop-color="#013f99"/><stop offset="0.341" stop-color="#473499"/><stop offset="0.446" stop-color="#992698"/><stop offset="0.484" stop-color="#991a7b"/><stop offset="0.525" stop-color="#991164"/><stop offset="0.637" stop-color="#99013e"/><stop offset="0.789" stop-color="#990022"/><stop offset="0.998" stop-color="#99000d"/></linearGradient><linearGradient id="c225" x1="0" x2="1" y1="0" y2="0"><stop offset="0.004" stop-color="#006aff"/><stop offset="0.018" stop-color="#0169ff"/><stop offset="0.076" stop-color="#1a65ff"/><stop offset="0.243" stop-color="#6759ff"/><stop offset="0.366" stop-color="#a94eff"/><stop offset="0.511" stop-color="#ff40fd"/><stop offset="0.605" stop-color="#ff2ac9"/><stop offset="0.714" stop-color="#ff199f"/><stop offset="0.844" stop-color="#ff0a7c"/><stop offset="0.996" stop-color="#ff005e"/></linearGradient><linearGradient id="c226" x1="0" x2="1" y1="0" y2="0"><stop offset="0.002" stop-color="#004d99"/><stop offset="0.231" stop-color="#003d99"/><stop offset="0.348" stop-color="#473199"/><stop offset="0.455" stop-color="#992398"/><stop offset="0.494" stop-color="#99187b"/><stop offset="0.536" stop-color="#990f65"/><stop offset="0.646" stop-color="#99003f"/><stop offset="0.794" stop-color="#990024"/><stop offset="0.998" stop-color="#99000f"/></linearGradient><linearGradient id="c227" x1="0" x2="1" y1="0" y2="0"><stop offset="0.004" stop-color="#0065ff"/><stop offset="0.108" stop-color="#285fff"/><stop offset="0.265" stop-color="#6f53ff"/><stop offset="0.384" stop-color="#ad49ff"/><stop offset="0.526" stop-color="#ff3afd"/><stop offset="0.616" stop-color="#ff28ce"/><stop offset="0.720" stop-color="#ff18a5"/><stop offset="0.847" stop-color="#ff0a82"/><stop offset="0.996" stop-color="#ff0064"/></linearGradient><linearGradient id="c228" x1="0" x2="1" y1="0" y2="0"><stop offset="0.002" stop-color="#004b99"/><stop offset="0.229" stop-color="#003a99"/><stop offset="0.348" stop-color="#462e99"/><stop offset="0.460" stop-color="#992098"/><stop offset="0.500" stop-color="#99157c"/><stop offset="0.543" stop-color="#990d65"/><stop offset="0.652" stop-color="#990041"/><stop offset="0.800" stop-color="#990025"/><stop offset="0.998" stop-color="#990011"/></linearGradient><linearGradient id="c229" x1="0" x2="1" y1="0" y2="0"><stop offset="0.004" stop-color="#0062ff"/><stop offset="0.104" stop-color="#235bff"/><stop offset="0.273" stop-color="#6d4fff"/><stop offset="0.404" stop-color="#ae44ff"/><stop offset="0.550" stop-color="#ff36fe"/><stop offset="0.642" stop-color="#ff24ce"/><stop offset="0.742" stop-color="#ff15a9"/><stop offset="0.858" stop-color="#ff0988"/><stop offset="0.996" stop-color="#ff006c"/></linearGradient><linearGradient id="c230" x1="0" x2="1" y1="0" y2="0"><stop offset="0.002" stop-color="#004899"/><stop offset="0.231" stop-color="#013899"/><stop offset="0.355" stop-color="#482b99"/><stop offset="0.466" stop-color="#991d99"/><stop offset="0.503" stop-color="#99147e"/><stop offset="0.547" stop-color="#990b67"/><stop offset="0.655" stop-color="#990043"/><stop offset="0.803" stop-color="#990027"/><stop offset="0.998" stop-color="#990013"/></linearGradient><linearGradient id="c231" x1="0" x2="1" y1="0" y2="0"><stop offset="0.004" stop-color="#005eff"/><stop offset="0.020" stop-color="#015dff"/><stop offset="0.091" stop-color="#1c58ff"/><stop offset="0.280" stop-color="#6a4bff"/><stop offset="0.421" stop-color="#ae3fff"/><stop offset="0.571" stop-color="#ff31fe"/><stop offset="0.657" stop-color="#ff21d3"/><stop offset="0.752" stop-color="#ff14af"/><stop offset="0.862" stop-color="#ff088f"/><stop offset="0.996" stop-color="#ff0072"/></linearGradient><linearGradient id="c232" x1="0" x2="1" y1="0" y2="0"><stop offset="0.002" stop-color="#004699"/><stop offset="0.231" stop-color="#003599"/><stop offset="0.358" stop-color="#472999"/><stop offset="0.474" stop-color="#991a99"/><stop offset="0.512" stop-color="#99117f"/><stop offset="0.557" stop-color="#990968"/><stop offset="0.663" stop-color="#990044"/><stop offset="0.807" stop-color="#990029"/><stop offset="0.998" stop-color="#990015"/></linearGradient><linearGradient id="c233" x1="0" x2="1" y1="0" y2="0"><stop offset="0.004" stop-color="#005aff"/><stop offset="0.134" stop-color="#2d51ff"/><stop offset="0.305" stop-color="#7345ff"/><stop offset="0.451" stop-color="#b739ff"/><stop offset="0.589" stop-color="#ff2cff"/><stop offset="0.671" stop-color="#ff1ed7"/><stop offset="0.768" stop-color="#ff11b2"/><stop offset="0.874" stop-color="#ff0794"/><stop offset="0.996" stop-color="#ff0079"/></linearGradient><linearGradient id="c234" x1="0" x2="1" y1="0" y2="0"><stop offset="0.002" stop-color="#004499"/><stop offset="0.230" stop-color="#003399"/><stop offset="0.363" stop-color="#472699"/><stop offset="0.482" stop-color="#991899"/><stop offset="0.563" stop-color="#99086a"/><stop offset="0.672" stop-color="#990046"/><stop offset="0.812" stop-color="#99002b"/><stop offset="0.998" stop-color="#990017"/></linearGradient><linearGradient id="c235" x1="0" x2="1" y1="0" y2="0"><stop offset="0.004" stop-color="#0056ff"/><stop offset="0.122" stop-color="#254fff"/><stop offset="0.315" stop-color="#7041ff"/><stop offset="0.475" stop-color="#b734ff"/><stop offset="0.618" stop-color="#ff27ff"/><stop offset="0.702" stop-color="#ff1ad8"/><stop offset="0.786" stop-color="#ff10b9"/><stop offset="0.996" stop-color="#ff0083"/></linearGradient><linearGradient id="c236" x1="0" x2="1" y1="0" y2="0"><stop offset="0.002" stop-color="#004199"/><stop offset="0.231" stop-color="#013199"/><stop offset="0.367" stop-color="#482499"/><stop offset="0.489" stop-color="#991599"/><stop offset="0.572" stop-color="#99066b"/><stop offset="0.676" stop-color="#990048"/><stop offset="0.815" stop-color="#99002d"/><stop offset="0.998" stop-color="#990019"/></linearGradient><linearGradient id="c237" x1="0" x2="1" y1="0" y2="0"><stop offset="0.004" stop-color="#0052ff"/><stop offset="0.022" stop-color="#0151ff"/><stop offset="0.116" stop-color="#214bff"/><stop offset="0.323" stop-color="#6d3dff"/><stop offset="0.487" stop-color="#b330ff"/><stop offset="0.642" stop-color="#fe23ff"/><stop offset="0.806" stop-color="#ff0dbc"/><stop offset="0.996" stop-color="#ff008b"/></linearGradient><linearGradient id="c238" x1="0" x2="1" y1="0" y2="0"><stop offset="0.002" stop-color="#003f99"/><stop offset="0.229" stop-color="#002f99"/><stop offset="0.364" stop-color="#442299"/><stop offset="0.500" stop-color="#991197"/><stop offset="0.581" stop-color="#99046b"/><stop offset="0.687" stop-color="#990049"/><stop offset="0.822" stop-color="#99002f"/><stop offset="0.998" stop-color="#99001b"/></linearGradient><linearGradient id="c239" x1="0" x2="1" y1="0" y2="0"><stop offset="0.005" stop-color="#004eff"/><stop offset="0.149" stop-color="#2b46ff"/><stop offset="0.347" stop-color="#7238ff"/><stop offset="0.518" stop-color="#b72bff"/><stop offset="0.671" stop-color="#fe1eff"/><stop offset="0.824" stop-color="#ff0cc3"/><stop offset="0.995" stop-color="#ff0095"/></linearGradient><linearGradient id="c240" x1="0" x2="1" y1="0" y2="0"><stop offset="0.002" stop-color="#003d99"/><stop offset="0.229" stop-color="#002d99"/><stop offset="0.371" stop-color="#451f99"/><stop offset="0.509" stop-color="#990f97"/><stop offset="0.588" stop-color="#99026d"/><stop offset="0.692" stop-color="#99004b"/><stop offset="0.826" stop-color="#990031"/><stop offset="0.998" stop-color="#99001d"/></linearGradient><linearGradient id="c241" x1="0" x2="1" y1="0" y2="0"><stop offset="0.005" stop-color="#004bff"/><stop offset="0.144" stop-color="#2743ff"/><stop offset="0.356" stop-color="#6f35ff"/><stop offset="0.532" stop-color="#b428ff"/><stop offset="0.699" stop-color="#fd1aff"/><stop offset="0.838" stop-color="#ff0aca"/><stop offset="0.995" stop-color="#ff009e"/></linearGradient><linearGradient id="c242" x1="0" x2="1" y1="0" y2="0"><stop offset="0.002" stop-color="#003b99"/><stop offset="0.231" stop-color="#012a99"/><stop offset="0.376" stop-color="#451d99"/><stop offset="0.517" stop-color="#990c98"/><stop offset="0.597" stop-color="#99016e"/><stop offset="0.700" stop-color="#99004d"/><stop offset="0.830" stop-color="#990033"/><stop offset="0.998" stop-color="#99001f"/></linearGradient><linearGradient id="c243" x1="0" x2="1" y1="0" y2="0"><stop offset="0.005" stop-color="#0048ff"/><stop offset="0.024" stop-color="#0147ff"/><stop offset="0.130" stop-color="#2041ff"/><stop offset="0.370" stop-color="#6d31ff"/><stop offset="0.562" stop-color="#b424ff"/><stop offset="0.736" stop-color="#fd15ff"/><stop offset="0.870" stop-color="#ff07ce"/><stop offset="0.995" stop-color="#ff00ab"/></linearGradient><linearGradient id="c244" x1="0" x2="1" y1="0" y2="0"><stop offset="0.002" stop-color="#003899"/><stop offset="0.229" stop-color="#002899"/><stop offset="0.382" stop-color="#461a99"/><stop offset="0.527" stop-color="#990a98"/><stop offset="0.606" stop-color="#990070"/><stop offset="0.708" stop-color="#99004f"/><stop offset="0.837" stop-color="#990036"/><stop offset="0.998" stop-color="#990022"/></linearGradient><linearGradient id="c245" x1="0" x2="1" y1="0" y2="0"><stop offset="0.005" stop-color="#0044ff"/><stop offset="0.025" stop-color="#0043ff"/><stop offset="0.124" stop-color="#1c3eff"/><stop offset="0.381" stop-color="#6b2eff"/><stop offset="0.579" stop-color="#b120ff"/><stop offset="0.767" stop-color="#fc11ff"/><stop offset="0.886" stop-color="#ff05d5"/><stop offset="0.995" stop-color="#ff00b5"/></linearGradient><linearGradient id="c246" x1="0" x2="1" y1="0" y2="0"><stop offset="0.002" stop-color="#003699"/><stop offset="0.227" stop-color="#002699"/><stop offset="0.388" stop-color="#471899"/><stop offset="0.536" stop-color="#990798"/><stop offset="0.616" stop-color="#990070"/><stop offset="0.717" stop-color="#990051"/><stop offset="0.841" stop-color="#990038"/><stop offset="0.998" stop-color="#990024"/></linearGradient><linearGradient id="c247" x1="0" x2="1" y1="0" y2="0"><stop offset="0.005" stop-color="#0041ff"/><stop offset="0.160" stop-color="#2638ff"/><stop offset="0.407" stop-color="#6f29ff"/><stop offset="0.613" stop-color="#b51bff"/><stop offset="0.799" stop-color="#fc0dff"/><stop offset="0.995" stop-color="#ff00c1"/></linearGradient><linearGradient id="c248" x1="0" x2="1" y1="0" y2="0"><stop offset="0.002" stop-color="#003499"/><stop offset="0.228" stop-color="#012499"/><stop offset="0.393" stop-color="#471699"/><stop offset="0.545" stop-color="#990599"/><stop offset="0.623" stop-color="#990073"/><stop offset="0.722" stop-color="#990054"/><stop offset="0.846" stop-color="#99003b"/><stop offset="0.998" stop-color="#990027"/></linearGradient><linearGradient id="c249" x1="0" x2="1" y1="0" y2="0"><stop offset="0.005" stop-color="#003eff"/><stop offset="0.156" stop-color="#2236ff"/><stop offset="0.425" stop-color="#6d26ff"/><stop offset="0.640" stop-color="#b118ff"/><stop offset="0.844" stop-color="#fb09ff"/><stop offset="0.995" stop-color="#ff00d0"/></linearGradient><linearGradient id="c250" x1="0" x2="1" y1="0" y2="0"><stop offset="0.002" stop-color="#003299"/><stop offset="0.229" stop-color="#002299"/><stop offset="0.401" stop-color="#481399"/><stop offset="0.557" stop-color="#990299"/><stop offset="0.632" stop-color="#990075"/><stop offset="0.729" stop-color="#990056"/><stop offset="0.851" stop-color="#99003d"/><stop offset="0.998" stop-color="#99002a"/></linearGradient><linearGradient id="c251" x1="0" x2="1" y1="0" y2="0"><stop offset="0.006" stop-color="#003aff"/><stop offset="0.028" stop-color="#0139ff"/><stop offset="0.150" stop-color="#1e33ff"/><stop offset="0.439" stop-color="#6a23ff"/><stop offset="0.672" stop-color="#b214ff"/><stop offset="0.894" stop-color="#ff04ff"/><stop offset="0.994" stop-color="#ff00de"/></linearGradient><linearGradient id="c252" x1="0" x2="1" y1="0" y2="0"><stop offset="0.002" stop-color="#003099"/><stop offset="0.227" stop-color="#002199"/><stop offset="0.409" stop-color="#481199"/><stop offset="0.569" stop-color="#990099"/><stop offset="0.647" stop-color="#990075"/><stop offset="0.742" stop-color="#990058"/><stop offset="0.859" stop-color="#990040"/><stop offset="0.998" stop-color="#99002d"/></linearGradient><linearGradient id="c253" x1="0" x2="1" y1="0" y2="0"><stop offset="0.006" stop-color="#0037ff"/><stop offset="0.206" stop-color="#2a2dff"/><stop offset="0.488" stop-color="#721eff"/><stop offset="0.724" stop-color="#b610ff"/><stop offset="0.947" stop-color="#ff00ff"/><stop offset="0.994" stop-color="#ff00f0"/></linearGradient><linearGradient id="c254" x1="0" x2="1" y1="0" y2="0"><stop offset="0.002" stop-color="#002d99"/><stop offset="0.229" stop-color="#011f99"/><stop offset="0.416" stop-color="#490f99"/><stop offset="0.580" stop-color="#980099"/><stop offset="0.660" stop-color="#990076"/><stop offset="0.749" stop-color="#99005b"/><stop offset="0.860" stop-color="#990044"/><stop offset="0.998" stop-color="#990030"/></linearGradient><linearGradient id="c255" x1="0" x2="1" y1="0" y2="0"><stop offset="0.006" stop-color="#0034ff"/><stop offset="0.189" stop-color="#232cff"/><stop offset="0.506" stop-color="#6f1bff"/><stop offset="0.762" stop-color="#b60cff"/><stop offset="0.994" stop-color="#fe00ff"/></linearGradient><linearGradient id="c256" x1="0" x2="1" y1="0" y2="0"><stop offset="0.002" stop-color="#002b99"/><stop offset="0.226" stop-color="#001d99"/><stop offset="0.413" stop-color="#450e99"/><stop offset="0.596" stop-color="#990097"/><stop offset="0.669" stop-color="#990078"/><stop offset="0.760" stop-color="#99005c"/><stop offset="0.870" stop-color="#990046"/><stop offset="0.998" stop-color="#990033"/></linearGradient><linearGradient id="c257" x1="0" x2="1" y1="0" y2="0"><stop offset="0.006" stop-color="#0031ff"/><stop offset="0.032" stop-color="#0130ff"/><stop offset="0.147" stop-color="#182bff"/><stop offset="0.481" stop-color="#611bff"/><stop offset="0.750" stop-color="#a50cff"/><stop offset="0.994" stop-color="#ea00ff"/></linearGradient><linearGradient id="c258" x1="0" x2="1" y1="0" y2="0"><stop offset="0.002" stop-color="#002999"/><stop offset="0.223" stop-color="#001b99"/><stop offset="0.420" stop-color="#460c99"/><stop offset="0.542" stop-color="#7a0099"/><stop offset="0.608" stop-color="#990098"/><stop offset="0.683" stop-color="#990078"/><stop offset="0.768" stop-color="#99005f"/><stop offset="0.871" stop-color="#990049"/><stop offset="0.998" stop-color="#990037"/></linearGradient><linearGradient id="c259" x1="0" x2="1" y1="0" y2="0"><stop offset="0.007" stop-color="#002eff"/><stop offset="0.182" stop-color="#1e26ff"/><stop offset="0.493" stop-color="#5f18ff"/><stop offset="0.993" stop-color="#db00ff"/></linearGradient><linearGradient id="c260" x1="0" x2="1" y1="0" y2="0"><stop offset="0.002" stop-color="#002799"/><stop offset="0.226" stop-color="#011999"/><stop offset="0.434" stop-color="#480999"/><stop offset="0.532" stop-color="#700099"/><stop offset="0.619" stop-color="#980099"/><stop offset="0.697" stop-color="#99007a"/><stop offset="0.779" stop-color="#990062"/><stop offset="0.998" stop-color="#99003b"/></linearGradient><linearGradient id="c261" x1="0" x2="1" y1="0" y2="0"><stop offset="0.007" stop-color="#002bff"/><stop offset="0.148" stop-color="#1625ff"/><stop offset="0.486" stop-color="#5717ff"/><stop offset="0.993" stop-color="#cc00ff"/></linearGradient><linearGradient id="c262" x1="0" x2="1" y1="0" y2="0"><stop offset="0.003" stop-color="#002599"/><stop offset="0.223" stop-color="#001899"/><stop offset="0.438" stop-color="#470799"/><stop offset="0.522" stop-color="#680099"/><stop offset="0.632" stop-color="#970099"/><stop offset="0.713" stop-color="#99007b"/><stop offset="0.792" stop-color="#990064"/><stop offset="0.998" stop-color="#99003f"/></linearGradient><linearGradient id="c263" x1="0" x2="1" y1="0" y2="0"><stop offset="0.007" stop-color="#0028ff"/><stop offset="0.097" stop-color="#0a25ff"/><stop offset="0.470" stop-color="#4d16ff"/><stop offset="0.993" stop-color="#ba00ff"/></linearGradient><linearGradient id="c264" x1="0" x2="1" y1="0" y2="0"><stop offset="0.003" stop-color="#002399"/><stop offset="0.223" stop-color="#001699"/><stop offset="0.449" stop-color="#470599"/><stop offset="0.515" stop-color="#600099"/><stop offset="0.649" stop-color="#970099"/><stop offset="0.803" stop-color="#990067"/><stop offset="0.997" stop-color="#990043"/></linearGradient><linearGradient id="c265" x1="0" x2="1" y1="0" y2="0"><stop offset="0.008" stop-color="#0025ff"/><stop offset="0.484" stop-color="#4b13ff"/><stop offset="0.992" stop-color="#ad00ff"/></linearGradient><linearGradient id="c266" x1="0" x2="1" y1="0" y2="0"><stop offset="0.003" stop-color="#002199"/><stop offset="0.225" stop-color="#011499"/><stop offset="0.458" stop-color="#480499"/><stop offset="0.669" stop-color="#990099"/><stop offset="0.812" stop-color="#99006a"/><stop offset="0.997" stop-color="#990047"/></linearGradient><linearGradient id="c267" x1="0" x2="1" y1="0" y2="0"><stop offset="0.008" stop-color="#0023ff"/><stop offset="0.449" stop-color="#3e13ff"/><stop offset="0.992" stop-color="#9d00ff"/></linearGradient><linearGradient id="c268" x1="0" x2="1" y1="0" y2="0"><stop offset="0.003" stop-color="#001f99"/><stop offset="0.223" stop-color="#001399"/><stop offset="0.470" stop-color="#480299"/><stop offset="0.690" stop-color="#990099"/><stop offset="0.827" stop-color="#99006d"/><stop offset="0.997" stop-color="#99004c"/></linearGradient><linearGradient id="c269" x1="0" x2="1" y1="0" y2="0"><stop offset="0.009" stop-color="#0020ff"/><stop offset="0.045" stop-color="#011fff"/><stop offset="0.420" stop-color="#3513ff"/><stop offset="0.991" stop-color="#9100ff"/></linearGradient><linearGradient id="c270" x1="0" x2="1" y1="0" y2="0"><stop offset="0.003" stop-color="#001d99"/><stop offset="0.219" stop-color="#001199"/><stop offset="0.480" stop-color="#490099"/><stop offset="0.707" stop-color="#990099"/><stop offset="0.838" stop-color="#990070"/><stop offset="0.997" stop-color="#990051"/></linearGradient><linearGradient id="c271" x1="0" x2="1" y1="0" y2="0"><stop offset="0.010" stop-color="#001dff"/><stop offset="0.441" stop-color="#3410ff"/><stop offset="0.990" stop-color="#8200ff"/></linearGradient><linearGradient id="c272" x1="0" x2="1" y1="0" y2="0"><stop offset="0.003" stop-color="#001b99"/><stop offset="0.221" stop-color="#010f99"/><stop offset="0.491" stop-color="#490099"/><stop offset="0.726" stop-color="#980099"/><stop offset="0.850" stop-color="#990074"/><stop offset="0.997" stop-color="#990056"/></linearGradient><linearGradient id="c273" x1="0" x2="1" y1="0" y2="0"><stop offset="0.010" stop-color="#001bff"/><stop offset="0.406" stop-color="#2b10ff"/><stop offset="0.990" stop-color="#7700ff"/></linearGradient><linearGradient id="c274" x1="0" x2="1" y1="0" y2="0"><stop offset="0.003" stop-color="#001999"/><stop offset="0.216" stop-color="#000e99"/><stop offset="0.497" stop-color="#480099"/><stop offset="0.747" stop-color="#980099"/><stop offset="0.863" stop-color="#990077"/><stop offset="0.997" stop-color="#99005c"/></linearGradient><linearGradient id="c275" x1="0" x2="1" y1="0" y2="0"><stop offset="0.011" stop-color="#0018ff"/><stop offset="0.367" stop-color="#220fff"/><stop offset="0.989" stop-color="#6c00ff"/></linearGradient><linearGradient id="c276" x1="0" x2="1" y1="0" y2="0"><stop offset="0.003" stop-color="#001799"/><stop offset="0.212" stop-color="#000d99"/><stop offset="0.509" stop-color="#480099"/><stop offset="0.769" stop-color="#980099"/><stop offset="0.877" stop-color="#99007a"/><stop offset="0.997" stop-color="#990061"/></linearGradient><linearGradient id="c277" x1="0" x2="1" y1="0" y2="0"><stop offset="0.013" stop-color="#0015ff"/><stop offset="0.388" stop-color="#210dff"/><stop offset="0.988" stop-color="#5f00ff"/></linearGradient><linearGradient id="c278" x1="0" x2="1" y1="0" y2="0"><stop offset="0.003" stop-color="#001599"/><stop offset="0.215" stop-color="#010b99"/><stop offset="0.407" stop-color="#2b0099"/><stop offset="0.526" stop-color="#490099"/><stop offset="0.798" stop-color="#980099"/><stop offset="0.997" stop-color="#990069"/></linearGradient><linearGradient id="c279" x1="0" x2="1" y1="0" y2="0"><stop offset="0.014" stop-color="#0013ff"/><stop offset="0.311" stop-color="#160dff"/><stop offset="0.986" stop-color="#5500ff"/></linearGradient><linearGradient id="c280" x1="0" x2="1" y1="0" y2="0"><stop offset="0.003" stop-color="#001399"/><stop offset="0.210" stop-color="#000999"/><stop offset="0.390" stop-color="#260099"/><stop offset="0.534" stop-color="#470099"/><stop offset="0.824" stop-color="#980099"/><stop offset="0.997" stop-color="#990070"/></linearGradient><linearGradient id="c281" x1="0" x2="1" y1="0" y2="0"><stop offset="0.015" stop-color="#0011ff"/><stop offset="0.197" stop-color="#0a0dff"/><stop offset="0.985" stop-color="#4900ff"/></linearGradient><linearGradient id="c282" x1="0" x2="1" y1="0" y2="0"><stop offset="0.004" stop-color="#001199"/><stop offset="0.205" stop-color="#000899"/><stop offset="0.371" stop-color="#200099"/><stop offset="0.550" stop-color="#480099"/><stop offset="0.853" stop-color="#970099"/><stop offset="0.996" stop-color="#990077"/></linearGradient><linearGradient id="c283" x1="0" x2="1" y1="0" y2="0"><stop offset="0.017" stop-color="#000eff"/><stop offset="0.983" stop-color="#4000ff"/></linearGradient><linearGradient id="c284" x1="0" x2="1" y1="0" y2="0"><stop offset="0.004" stop-color="#000f99"/><stop offset="0.207" stop-color="#010799"/><stop offset="0.342" stop-color="#1a0099"/><stop offset="0.568" stop-color="#480099"/><stop offset="0.891" stop-color="#990099"/><stop offset="0.996" stop-color="#99007f"/></linearGradient><linearGradient id="c285" x1="0" x2="1" y1="0" y2="0"><stop offset="0.020" stop-color="#000cff"/><stop offset="0.980" stop-color="#3500ff"/></linearGradient><linearGradient id="c286" x1="0" x2="1" y1="0" y2="0"><stop offset="0.004" stop-color="#000d99"/><stop offset="0.202" stop-color="#010599"/><stop offset="0.321" stop-color="#150099"/><stop offset="0.591" stop-color="#490099"/><stop offset="0.933" stop-color="#990099"/><stop offset="0.996" stop-color="#99008a"/></linearGradient><linearGradient id="c287" x1="0" x2="1" y1="0" y2="0"><stop offset="0.023" stop-color="#000aff"/><stop offset="0.977" stop-color="#2c00ff"/></linearGradient><linearGradient id="c288" x1="0" x2="1" y1="0" y2="0"><stop offset="0.004" stop-color="#000b99"/><stop offset="0.189" stop-color="#000499"/><stop offset="0.550" stop-color="#3e0099"/><stop offset="0.971" stop-color="#990099"/><stop offset="0.996" stop-color="#990093"/></linearGradient><linearGradient id="c289" x1="0" x2="1" y1="0" y2="0"><stop offset="0.028" stop-color="#0007ff"/><stop offset="0.972" stop-color="#2400ff"/></linearGradient><linearGradient id="c290" x1="0" x2="1" y1="0" y2="0"><stop offset="0.004" stop-color="#000999"/><stop offset="0.181" stop-color="#000399"/><stop offset="0.243" stop-color="#090099"/><stop offset="0.642" stop-color="#4b0099"/><stop offset="0.996" stop-color="#940099"/></linearGradient><linearGradient id="c291" x1="0" x2="1" y1="0" y2="0"><stop offset="0.036" stop-color="#0005ff"/><stop offset="0.964" stop-color="#1a00ff"/></linearGradient><linearGradient id="c292" x1="0" x2="1" y1="0" y2="0"><stop offset="0.005" stop-color="#000799"/><stop offset="0.173" stop-color="#000299"/><stop offset="0.229" stop-color="#070099"/><stop offset="0.631" stop-color="#450099"/><stop offset="0.995" stop-color="#8a0099"/></linearGradient><linearGradient id="c293" x1="0" x2="1" y1="0" y2="0"><stop offset="0.045" stop-color="#0003ff"/><stop offset="0.955" stop-color="#1200ff"/></linearGradient><linearGradient id="c294" x1="0" x2="1" y1="0" y2="0"><stop offset="0.005" stop-color="#000699"/><stop offset="0.205" stop-color="#040099"/><stop offset="0.615" stop-color="#3e0099"/><stop offset="0.995" stop-color="#7f0099"/></linearGradient><linearGradient id="c295" x1="0" x2="1" y1="0" y2="0"><stop offset="0.083" stop-color="#0001ff"/><stop offset="0.917" stop-color="#0900ff"/></linearGradient><linearGradient id="c296" x1="0" x2="1" y1="0" y2="0"><stop offset="0.005" stop-color="#000499"/><stop offset="0.156" stop-color="#000099"/><stop offset="0.210" stop-color="#060099"/><stop offset="0.618" stop-color="#3b0099"/><stop offset="0.995" stop-color="#750099"/></linearGradient><linearGradient id="c297" x1="0" x2="1" y1="0" y2="0"><stop offset="0.006" stop-color="#000299"/><stop offset="0.190" stop-color="#040099"/><stop offset="0.603" stop-color="#360099"/><stop offset="0.994" stop-color="#6d0099"/></linearGradient><linearGradient id="c298" x1="0" x2="1" y1="0" y2="0"><stop offset="0.006" stop-color="#000099"/><stop offset="0.131" stop-color="#000099"/><stop offset="0.206" stop-color="#080099"/><stop offset="0.994" stop-color="#640099"/></linearGradient><linearGradient id="c299" x1="0" x2="1" y1="0" y2="0"><stop offset="0.007" stop-color="#000099"/><stop offset="0.115" stop-color="#000099"/><stop offset="0.209" stop-color="#080099"/><stop offset="0.993" stop-color="#5c0099"/></linearGradient><linearGradient id="c300" x1="0" x2="1" y1="0" y2="0"><stop offset="0.008" stop-color="#000099"/><stop offset="0.098" stop-color="#010099"/><stop offset="0.250" stop-color="#0d0099"/><stop offset="0.992" stop-color="#530099"/></linearGradient><linearGradient id="c301" x1="0" x2="1" y1="0" y2="0"><stop offset="0.008" stop-color="#000099"/><stop offset="0.347" stop-color="#150099"/><stop offset="0.992" stop-color="#4b0099"/></linearGradient><linearGradient id="c302" x1="0" x2="1" y1="0" y2="0"><stop offset="0.010" stop-color="#000099"/><stop offset="0.990" stop-color="#440099"/></linearGradient><linearGradient id="c303" x1="0" x2="1" y1="0" y2="0"><stop offset="0.011" stop-color="#030099"/><stop offset="0.989" stop-color="#3d0099"/></linearGradient><linearGradient id="c304" x1="0" x2="1" y1="0" y2="0"><stop offset="0.014" stop-color="#070099"/><stop offset="0.986" stop-color="#350099"/></linearGradient><linearGradient id="c305" x1="0" x2="1" y1="0" y2="0"><stop offset="0.017" stop-color="#0b0099"/><stop offset="0.983" stop-color="#2e0099"/></linearGradient><linearGradient id="c306" x1="0" x2="1" y1="0" y2="0"><stop offset="0.024" stop-color="#0f0099"/><stop offset="0.976" stop-color="#280099"/></linearGradient><linearGradient id="c307" x1="0" x2="1" y1="0" y2="0"><stop offset="0.038" stop-color="#130099"/><stop offset="0.962" stop-color="#220099"/></linearGradient><clipPath id="locclip"><path d="M1099.5 502.8 L1099.5 502.8 L1099.5 502.8 L1099.5 502.8 L1099.4 502.8 L1099.4 502.8 L1099.4 502.8 L1099.4 502.8 L1099.3 502.8 L1099.3 502.8 L1099.3 502.8 L1099.2 502.8 L1099.2 502.8 L1099.2 502.8 L1099.1 502.8 L1099.1 502.8 L1099.1 502.9 L1099.0 502.9 L1099.0 502.9 L1098.9 502.9 L1098.9 502.9 L1098.8 502.9 L1098.8 502.9 L1098.7 502.9 L1098.7 502.9 L1098.6 502.9 L1098.5 502.9 L1098.5 502.8 L1098.4 502.8 L1098.3 502.8 L1098.2 502.8 L1098.1 502.8 L1098.0 502.7 L1097.9 502.7 L1097.7 502.6 L1097.6 502.5 L1097.4 502.4 L1097.2 502.3 L1097.1 502.2 L1096.9 502.1 L1096.6 501.9 L1096.4 501.8 L1096.1 501.6 L1095.9 501.4 L1095.6 501.2 L1095.3 500.9 L1094.9 500.7 L1094.6 500.4 L1094.2 500.1 L1093.8 499.8 L1093.4 499.5 L1092.9 499.2 L1092.4 498.8 L1091.8 498.4 L1091.3 498.0 L1090.6 497.6 L1090.0 497.1 L1089.3 496.6 L1088.5 496.0 L1087.7 495.5 L1086.9 494.8 L1086.0 494.1 L1085.1 493.4 L1084.1 492.6 L1083.0 491.7 L1082.0 490.7 L1080.9 489.7 L1079.7 488.6 L1078.4 487.1 L1077.0 485.5 L1075.5 483.7 L1073.9 481.6 L1072.2 479.1 L1070.4 476.4 L1068.5 473.4 L1066.5 470.0 L1064.3 466.1 L1062.0 461.8 L1059.6 457.0 L1057.0 451.6 L1054.3 445.6 L1051.4 439.0 L1048.3 431.7 L1045.2 423.8 L1042.0 415.2 L1038.8 405.7 L1035.6 395.5 L1032.4 384.5 L1029.3 373.0 L1026.1 360.6 L1023.0 347.5 L1020.0 333.9 L1017.3 320.3 L1014.8 306.4 L1012.5 292.1 L1010.5 277.9 L1009.0 264.0 L1007.8 250.5 L1006.9 237.1 L1006.5 224.2 L1006.6 211.9 L1007.2 200.2 L1008.3 189.0 L1009.9 178.6 L1012.1 169.2 L1014.8 160.8 L1018.0 153.3 L1021.7 146.8 L1025.7 141.5 L1030.1 137.5 L1034.9 134.7 L1039.9 132.9 L1045.0 131.8 L1050.3 131.6 L1055.7 132.3 L1061.3 133.6 L1066.8 135.2 L1072.3 137.0 L1077.9 139.3 L1083.5 141.8 L1088.9 144.3 L1094.2 146.9 L1099.5 149.5 L1104.6 152.3 L1109.7 155.1 L1114.8 158.1 L1119.8 161.1 L1124.8 164.2 L1129.8 167.4 L1134.7 170.6 L1139.7 173.9 L1144.6 177.3 L1149.5 180.8 L1154.4 184.3 L1159.3 187.9 L1164.2 191.5 L1169.1 195.1 L1173.9 198.8 L1178.8 202.5 L1183.7 206.3 L1188.6 210.1 L1193.4 213.9 L1198.3 217.8 L1203.2 221.6 L1208.1 225.5 L1212.9 229.4 L1217.8 233.3 L1222.7 237.2 L1227.5 241.1 L1232.3 245.0 L1237.2 248.9 L1242.0 252.8 L1246.8 256.7 L1251.5 260.6 L1256.3 264.5 L1261.0 268.3 L1265.7 272.2 L1270.4 276.0 L1275.0 279.7 L1279.6 283.5 L1284.1 287.2 L1288.6 290.9 L1293.0 294.5 L1297.4 298.1 L1301.7 301.6 L1306.0 305.1 L1310.2 308.5 L1314.3 311.8 L1318.3 315.1 L1322.2 318.3 L1326.1 321.5 L1329.8 324.6 L1333.5 327.5 L1336.9 330.4 L1340.3 333.1 L1343.5 335.7 L1346.6 338.3 L1349.7 340.8 L1352.6 343.2 L1355.5 345.5 L1358.2 347.7 L1360.7 349.8 L1363.2 351.8 L1365.5 353.7 L1367.7 355.5 L1369.9 357.2 L1371.9 358.9 L1373.8 360.4 L1375.6 361.9 L1377.3 363.3 L1378.8 364.6 L1380.4 365.8 L1381.8 367.0 L1383.1 368.1 L1384.4 369.1 L1385.6 370.1 L1386.8 371.0 L1387.8 371.9 L1388.8 372.7 L1389.8 373.5 L1390.7 374.3 L1391.6 375.0 L1392.5 375.7 L1393.3 376.4 L1394.1 377.0 L1394.8 377.6 L1395.5 378.2 L1396.2 378.7 L1396.8 379.3 L1397.4 379.7 L1398.0 380.2 L1398.5 380.6 L1399.0 381.0 L1399.4 381.4 L1399.8 381.7 L1400.2 382.0 L1400.6 382.4 L1401.1 382.8 L1401.7 383.3 L1402.3 383.7 L1402.8 384.1 L1403.1 384.4 L1403.4 384.7 L1403.6 384.9 L1403.9 385.0 L1404.1 385.2 L1404.2 385.4 L1404.4 385.6 L1404.7 385.7 L1405.0 385.7 L1405.5 385.6 L1406.0 385.6 L1406.3 385.5 Z"/></clipPath><clipPath id="triclip"><path d="M1168.2 236.4 L1353.7 357.3 L1086.3 478.1 Z"/></clipPath></defs><g clip-path="url(#locclip)"><rect x="1038" y="131" width="23" height="2" fill="url(#c0)"/><rect x="1033" y="133" width="36" height="2" fill="url(#c1)"/><rect x="1029" y="135" width="46" height="2" fill="url(#c2)"/><rect x="1027" y="137" width="53" height="2" fill="url(#c3)"/><rect x="1025" y="139" width="59" height="2" fill="url(#c4)"/><rect x="1023" y="141" width="66" height="2" fill="url(#c5)"/><rect x="1022" y="143" width="71" height="2" fill="url(#c6)"/><rect x="1020" y="145" width="77" height="2" fill="url(#c7)"/><rect x="1019" y="147" width="82" height="2" fill="url(#c8)"/><rect x="1018" y="149" width="87" height="2" fill="url(#c9)"/><rect x="1017" y="151" width="91" height="2" fill="url(#c10)"/><rect x="1016" y="153" width="96" height="2" fill="url(#c11)"/><rect x="1015" y="155" width="100" height="2" fill="url(#c12)"/><rect x="1014" y="157" width="105" height="2" fill="url(#c13)"/><rect x="1013" y="159" width="109" height="2" fill="url(#c14)"/><rect x="1013" y="161" width="112" height="2" fill="url(#c15)"/><rect x="1012" y="163" width="117" height="2" fill="url(#c16)"/><rect x="1011" y="165" width="121" height="2" fill="url(#c17)"/><rect x="1011" y="167" width="124" height="2" fill="url(#c18)"/><rect x="1010" y="169" width="128" height="2" fill="url(#c19)"/><rect x="1010" y="171" width="131" height="2" fill="url(#c20)"/><rect x="1009" y="173" width="135" height="2" fill="url(#c21)"/><rect x="1009" y="175" width="138" height="2" fill="url(#c22)"/><rect x="1008" y="177" width="141" height="2" fill="url(#c23)"/><rect x="1008" y="179" width="144" height="2" fill="url(#c24)"/><rect x="1008" y="181" width="147" height="2" fill="url(#c25)"/><rect x="1007" y="183" width="151" height="2" fill="url(#c26)"/><rect x="1007" y="185" width="154" height="2" fill="url(#c27)"/><rect x="1007" y="187" width="156" height="2" fill="url(#c28)"/><rect x="1007" y="189" width="159" height="2" fill="url(#c29)"/><rect x="1006" y="191" width="163" height="2" fill="url(#c30)"/><rect x="1006" y="193" width="165" height="2" fill="url(#c31)"/><rect x="1006" y="195" width="168" height="2" fill="url(#c32)"/><rect x="1006" y="197" width="171" height="2" fill="url(#c33)"/><rect x="1006" y="199" width="173" height="2" fill="url(#c34)"/><rect x="1006" y="201" width="176" height="2" fill="url(#c35)"/><rect x="1005" y="203" width="179" height="2" fill="url(#c36)"/><rect x="1005" y="205" width="182" height="2" fill="url(#c37)"/><rect x="1005" y="207" width="185" height="2" fill="url(#c38)"/><rect x="1005" y="209" width="187" height="2" fill="url(#c39)"/><rect x="1005" y="211" width="190" height="2" fill="url(#c40)"/><rect x="1005" y="213" width="192" height="2" fill="url(#c41)"/><rect x="1005" y="215" width="195" height="2" fill="url(#c42)"/><rect x="1005" y="217" width="197" height="2" fill="url(#c43)"/><rect x="1005" y="219" width="200" height="2" fill="url(#c44)"/><rect x="1005" y="221" width="202" height="2" fill="url(#c45)"/><rect x="1005" y="223" width="205" height="2" fill="url(#c46)"/><rect x="1005" y="225" width="207" height="2" fill="url(#c47)"/><rect x="1005" y="227" width="210" height="2" fill="url(#c48)"/><rect x="1005" y="229" width="212" height="2" fill="url(#c49)"/><rect x="1005" y="231" width="215" height="2" fill="url(#c50)"/><rect x="1005" y="233" width="217" height="2" fill="url(#c51)"/><rect x="1005" y="235" width="220" height="2" fill="url(#c52)"/><rect x="1005" y="237" width="222" height="2" fill="url(#c54)"/><rect x="1006" y="239" width="224" height="2" fill="url(#c56)"/><rect x="1006" y="241" width="226" height="2" fill="url(#c58)"/><rect x="1006" y="243" width="229" height="2" fill="url(#c60)"/><rect x="1006" y="245" width="231" height="2" fill="url(#c62)"/><rect x="1006" y="247" width="234" height="2" fill="url(#c64)"/><rect x="1006" y="249" width="236" height="2" fill="url(#c66)"/><rect x="1006" y="251" width="239" height="2" fill="url(#c68)"/><rect x="1006" y="253" width="241" height="2" fill="url(#c70)"/><rect x="1007" y="255" width="243" height="2" fill="url(#c72)"/><rect x="1007" y="257" width="245" height="2" fill="url(#c74)"/><rect x="1007" y="259" width="248" height="2" fill="url(#c76)"/><rect x="1007" y="261" width="250" height="2" fill="url(#c78)"/><rect x="1007" y="263" width="252" height="2" fill="url(#c80)"/><rect x="1008" y="265" width="254" height="2" fill="url(#c82)"/><rect x="1008" y="267" width="256" height="2" fill="url(#c84)"/><rect x="1008" y="269" width="259" height="2" fill="url(#c86)"/><rect x="1008" y="271" width="261" height="2" fill="url(#c88)"/><rect x="1008" y="273" width="264" height="2" fill="url(#c90)"/><rect x="1009" y="275" width="265" height="2" fill="url(#c92)"/><rect x="1009" y="277" width="268" height="2" fill="url(#c94)"/><rect x="1009" y="279" width="270" height="2" fill="url(#c96)"/><rect x="1009" y="281" width="272" height="2" fill="url(#c98)"/><rect x="1010" y="283" width="274" height="2" fill="url(#c100)"/><rect x="1010" y="285" width="276" height="2" fill="url(#c102)"/><rect x="1010" y="287" width="279" height="2" fill="url(#c104)"/><rect x="1011" y="289" width="280" height="2" fill="url(#c106)"/><rect x="1011" y="291" width="283" height="2" fill="url(#c108)"/><rect x="1011" y="293" width="285" height="2" fill="url(#c110)"/><rect x="1011" y="295" width="288" height="2" fill="url(#c112)"/><rect x="1012" y="297" width="289" height="2" fill="url(#c114)"/><rect x="1012" y="299" width="292" height="2" fill="url(#c116)"/><rect x="1012" y="301" width="294" height="2" fill="url(#c118)"/><rect x="1013" y="303" width="295" height="2" fill="url(#c120)"/><rect x="1013" y="305" width="298" height="2" fill="url(#c122)"/><rect x="1013" y="307" width="300" height="2" fill="url(#c124)"/><rect x="1014" y="309" width="302" height="2" fill="url(#c126)"/><rect x="1014" y="311" width="304" height="2" fill="url(#c128)"/><rect x="1015" y="313" width="306" height="2" fill="url(#c130)"/><rect x="1015" y="315" width="308" height="2" fill="url(#c132)"/><rect x="1015" y="317" width="311" height="2" fill="url(#c134)"/><rect x="1016" y="319" width="312" height="2" fill="url(#c136)"/><rect x="1016" y="321" width="314" height="2" fill="url(#c138)"/><rect x="1016" y="323" width="317" height="2" fill="url(#c140)"/><rect x="1017" y="325" width="318" height="2" fill="url(#c142)"/><rect x="1017" y="327" width="321" height="2" fill="url(#c144)"/><rect x="1018" y="329" width="322" height="2" fill="url(#c146)"/><rect x="1018" y="331" width="325" height="2" fill="url(#c148)"/><rect x="1018" y="333" width="327" height="2" fill="url(#c150)"/><rect x="1019" y="335" width="329" height="2" fill="url(#c152)"/><rect x="1019" y="337" width="331" height="2" fill="url(#c154)"/><rect x="1020" y="339" width="332" height="2" fill="url(#c156)"/><rect x="1020" y="341" width="335" height="2" fill="url(#c158)"/><rect x="1021" y="343" width="336" height="2" fill="url(#c160)"/><rect x="1021" y="345" width="339" height="2" fill="url(#c162)"/><rect x="1021" y="347" width="341" height="2" fill="url(#c164)"/><rect x="1022" y="349" width="343" height="2" fill="url(#c166)"/><rect x="1022" y="351" width="345" height="2" fill="url(#c168)"/><rect x="1023" y="353" width="347" height="2" fill="url(#c170)"/><rect x="1023" y="355" width="349" height="2" fill="url(#c172)"/><rect x="1024" y="357" width="351" height="2" fill="url(#c174)"/><rect x="1024" y="359" width="353" height="2" fill="url(#c176)"/><rect x="1025" y="361" width="354" height="2" fill="url(#c178)"/><rect x="1025" y="363" width="357" height="2" fill="url(#c180)"/><rect x="1026" y="365" width="358" height="2" fill="url(#c182)"/><rect x="1026" y="367" width="361" height="2" fill="url(#c184)"/><rect x="1027" y="369" width="362" height="2" fill="url(#c186)"/><rect x="1027" y="371" width="365" height="2" fill="url(#c188)"/><rect x="1028" y="373" width="366" height="2" fill="url(#c190)"/><rect x="1028" y="375" width="369" height="2" fill="url(#c192)"/><rect x="1029" y="377" width="370" height="2" fill="url(#c194)"/><rect x="1029" y="379" width="372" height="2" fill="url(#c196)"/><rect x="1030" y="381" width="374" height="2" fill="url(#c198)"/><rect x="1030" y="383" width="376" height="2" fill="url(#c200)"/><rect x="1031" y="385" width="377" height="2" fill="url(#c202)"/><rect x="1032" y="387" width="373" height="2" fill="url(#c204)"/><rect x="1032" y="389" width="368" height="2" fill="url(#c206)"/><rect x="1033" y="391" width="361" height="2" fill="url(#c208)"/><rect x="1033" y="393" width="356" height="2" fill="url(#c210)"/><rect x="1034" y="395" width="350" height="2" fill="url(#c212)"/><rect x="1035" y="397" width="344" height="2" fill="url(#c214)"/><rect x="1035" y="399" width="339" height="2" fill="url(#c216)"/><rect x="1036" y="401" width="332" height="2" fill="url(#c218)"/><rect x="1036" y="403" width="327" height="2" fill="url(#c220)"/><rect x="1037" y="405" width="321" height="2" fill="url(#c222)"/><rect x="1038" y="407" width="315" height="2" fill="url(#c224)"/><rect x="1038" y="409" width="309" height="2" fill="url(#c226)"/><rect x="1039" y="411" width="303" height="2" fill="url(#c228)"/><rect x="1040" y="413" width="297" height="2" fill="url(#c230)"/><rect x="1040" y="415" width="292" height="2" fill="url(#c232)"/><rect x="1041" y="417" width="285" height="2" fill="url(#c234)"/><rect x="1042" y="419" width="279" height="2" fill="url(#c236)"/><rect x="1043" y="421" width="273" height="2" fill="url(#c238)"/><rect x="1043" y="423" width="268" height="2" fill="url(#c240)"/><rect x="1044" y="425" width="262" height="2" fill="url(#c242)"/><rect x="1045" y="427" width="255" height="2" fill="url(#c244)"/><rect x="1046" y="429" width="249" height="2" fill="url(#c246)"/><rect x="1047" y="431" width="243" height="2" fill="url(#c248)"/><rect x="1047" y="433" width="238" height="2" fill="url(#c250)"/><rect x="1048" y="435" width="231" height="2" fill="url(#c252)"/><rect x="1049" y="437" width="225" height="2" fill="url(#c254)"/><rect x="1050" y="439" width="219" height="2" fill="url(#c256)"/><rect x="1051" y="441" width="213" height="2" fill="url(#c258)"/><rect x="1052" y="443" width="206" height="2" fill="url(#c260)"/><rect x="1053" y="445" width="200" height="2" fill="url(#c262)"/><rect x="1053" y="447" width="195" height="2" fill="url(#c264)"/><rect x="1054" y="449" width="189" height="2" fill="url(#c266)"/><rect x="1055" y="451" width="182" height="2" fill="url(#c268)"/><rect x="1056" y="453" width="176" height="2" fill="url(#c270)"/><rect x="1057" y="455" width="170" height="2" fill="url(#c272)"/><rect x="1058" y="457" width="164" height="2" fill="url(#c274)"/><rect x="1059" y="459" width="158" height="2" fill="url(#c276)"/><rect x="1060" y="461" width="151" height="2" fill="url(#c278)"/><rect x="1061" y="463" width="145" height="2" fill="url(#c280)"/><rect x="1062" y="465" width="139" height="2" fill="url(#c282)"/><rect x="1063" y="467" width="133" height="2" fill="url(#c284)"/><rect x="1064" y="469" width="126" height="2" fill="url(#c286)"/><rect x="1066" y="471" width="119" height="2" fill="url(#c288)"/><rect x="1067" y="473" width="113" height="2" fill="url(#c290)"/><rect x="1068" y="475" width="107" height="2" fill="url(#c292)"/><rect x="1069" y="477" width="100" height="2" fill="url(#c294)"/><rect x="1071" y="479" width="93" height="2" fill="url(#c296)"/><rect x="1072" y="481" width="87" height="2" fill="url(#c297)"/><rect x="1074" y="483" width="80" height="2" fill="url(#c298)"/><rect x="1075" y="485" width="74" height="2" fill="url(#c299)"/><rect x="1077" y="487" width="66" height="2" fill="url(#c300)"/><rect x="1079" y="489" width="59" height="2" fill="url(#c301)"/><rect x="1081" y="491" width="52" height="2" fill="url(#c302)"/><rect x="1083" y="493" width="45" height="2" fill="url(#c303)"/><rect x="1086" y="495" width="36" height="2" fill="url(#c304)"/><rect x="1088" y="497" width="29" height="2" fill="url(#c305)"/><rect x="1091" y="499" width="21" height="2" fill="url(#c306)"/><rect x="1094" y="501" width="13" height="2" fill="url(#c307)"/></g><g clip-path="url(#triclip)"><rect x="1166" y="235" width="6" height="2" fill="url(#c53)"/><rect x="1166" y="237" width="9" height="2" fill="url(#c55)"/><rect x="1165" y="239" width="13" height="2" fill="url(#c57)"/><rect x="1164" y="241" width="17" height="2" fill="url(#c59)"/><rect x="1164" y="243" width="20" height="2" fill="url(#c61)"/><rect x="1163" y="245" width="24" height="2" fill="url(#c63)"/><rect x="1162" y="247" width="28" height="2" fill="url(#c65)"/><rect x="1162" y="249" width="31" height="2" fill="url(#c67)"/><rect x="1161" y="251" width="35" height="2" fill="url(#c69)"/><rect x="1160" y="253" width="39" height="2" fill="url(#c71)"/><rect x="1160" y="255" width="42" height="2" fill="url(#c73)"/><rect x="1159" y="257" width="46" height="2" fill="url(#c75)"/><rect x="1158" y="259" width="50" height="2" fill="url(#c77)"/><rect x="1158" y="261" width="53" height="2" fill="url(#c79)"/><rect x="1157" y="263" width="58" height="2" fill="url(#c81)"/><rect x="1156" y="265" width="62" height="2" fill="url(#c83)"/><rect x="1156" y="267" width="65" height="2" fill="url(#c85)"/><rect x="1155" y="269" width="69" height="2" fill="url(#c87)"/><rect x="1154" y="271" width="73" height="2" fill="url(#c89)"/><rect x="1154" y="273" width="76" height="2" fill="url(#c91)"/><rect x="1153" y="275" width="80" height="2" fill="url(#c93)"/><rect x="1152" y="277" width="84" height="2" fill="url(#c95)"/><rect x="1152" y="279" width="87" height="2" fill="url(#c97)"/><rect x="1151" y="281" width="91" height="2" fill="url(#c99)"/><rect x="1150" y="283" width="95" height="2" fill="url(#c101)"/><rect x="1150" y="285" width="98" height="2" fill="url(#c103)"/><rect x="1149" y="287" width="102" height="2" fill="url(#c105)"/><rect x="1148" y="289" width="106" height="2" fill="url(#c107)"/><rect x="1148" y="291" width="109" height="2" fill="url(#c109)"/><rect x="1147" y="293" width="114" height="2" fill="url(#c111)"/><rect x="1146" y="295" width="118" height="2" fill="url(#c113)"/><rect x="1145" y="297" width="122" height="2" fill="url(#c115)"/><rect x="1145" y="299" width="125" height="2" fill="url(#c117)"/><rect x="1144" y="301" width="129" height="2" fill="url(#c119)"/><rect x="1143" y="303" width="133" height="2" fill="url(#c121)"/><rect x="1143" y="305" width="136" height="2" fill="url(#c123)"/><rect x="1142" y="307" width="140" height="2" fill="url(#c125)"/><rect x="1141" y="309" width="144" height="2" fill="url(#c127)"/><rect x="1141" y="311" width="147" height="2" fill="url(#c129)"/><rect x="1140" y="313" width="151" height="2" fill="url(#c131)"/><rect x="1139" y="315" width="155" height="2" fill="url(#c133)"/><rect x="1139" y="317" width="158" height="2" fill="url(#c135)"/><rect x="1138" y="319" width="162" height="2" fill="url(#c137)"/><rect x="1137" y="321" width="167" height="2" fill="url(#c139)"/><rect x="1137" y="323" width="170" height="2" fill="url(#c141)"/><rect x="1136" y="325" width="174" height="2" fill="url(#c143)"/><rect x="1135" y="327" width="178" height="2" fill="url(#c145)"/><rect x="1135" y="329" width="181" height="2" fill="url(#c147)"/><rect x="1134" y="331" width="185" height="2" fill="url(#c149)"/><rect x="1133" y="333" width="189" height="2" fill="url(#c151)"/><rect x="1133" y="335" width="192" height="2" fill="url(#c153)"/><rect x="1132" y="337" width="196" height="2" fill="url(#c155)"/><rect x="1131" y="339" width="200" height="2" fill="url(#c157)"/><rect x="1131" y="341" width="203" height="2" fill="url(#c159)"/><rect x="1130" y="343" width="207" height="2" fill="url(#c161)"/><rect x="1129" y="345" width="211" height="2" fill="url(#c163)"/><rect x="1129" y="347" width="214" height="2" fill="url(#c165)"/><rect x="1128" y="349" width="219" height="2" fill="url(#c167)"/><rect x="1127" y="351" width="223" height="2" fill="url(#c169)"/><rect x="1127" y="353" width="226" height="2" fill="url(#c171)"/><rect x="1126" y="355" width="230" height="2" fill="url(#c173)"/><rect x="1125" y="357" width="231" height="2" fill="url(#c175)"/><rect x="1125" y="359" width="227" height="2" fill="url(#c177)"/><rect x="1124" y="361" width="224" height="2" fill="url(#c179)"/><rect x="1123" y="363" width="221" height="2" fill="url(#c181)"/><rect x="1122" y="365" width="217" height="2" fill="url(#c183)"/><rect x="1122" y="367" width="213" height="2" fill="url(#c185)"/><rect x="1121" y="369" width="209" height="2" fill="url(#c187)"/><rect x="1120" y="371" width="206" height="2" fill="url(#c189)"/><rect x="1120" y="373" width="201" height="2" fill="url(#c191)"/><rect x="1119" y="375" width="198" height="2" fill="url(#c193)"/><rect x="1118" y="377" width="195" height="2" fill="url(#c195)"/><rect x="1118" y="379" width="190" height="2" fill="url(#c197)"/><rect x="1117" y="381" width="187" height="2" fill="url(#c199)"/><rect x="1116" y="383" width="183" height="2" fill="url(#c201)"/><rect x="1116" y="385" width="179" height="2" fill="url(#c203)"/><rect x="1115" y="387" width="175" height="2" fill="url(#c205)"/><rect x="1114" y="389" width="172" height="2" fill="url(#c207)"/><rect x="1114" y="391" width="168" height="2" fill="url(#c209)"/><rect x="1113" y="393" width="164" height="2" fill="url(#c211)"/><rect x="1112" y="395" width="161" height="2" fill="url(#c213)"/><rect x="1112" y="397" width="156" height="2" fill="url(#c215)"/><rect x="1111" y="399" width="153" height="2" fill="url(#c217)"/><rect x="1110" y="401" width="149" height="2" fill="url(#c219)"/><rect x="1110" y="403" width="145" height="2" fill="url(#c221)"/><rect x="1109" y="405" width="142" height="2" fill="url(#c223)"/><rect x="1108" y="407" width="138" height="2" fill="url(#c225)"/><rect x="1108" y="409" width="134" height="2" fill="url(#c227)"/><rect x="1107" y="411" width="130" height="2" fill="url(#c229)"/><rect x="1106" y="413" width="127" height="2" fill="url(#c231)"/><rect x="1106" y="415" width="123" height="2" fill="url(#c233)"/><rect x="1105" y="417" width="119" height="2" fill="url(#c235)"/><rect x="1104" y="419" width="116" height="2" fill="url(#c237)"/><rect x="1104" y="421" width="111" height="2" fill="url(#c239)"/><rect x="1103" y="423" width="108" height="2" fill="url(#c241)"/><rect x="1102" y="425" width="104" height="2" fill="url(#c243)"/><rect x="1101" y="427" width="101" height="2" fill="url(#c245)"/><rect x="1101" y="429" width="97" height="2" fill="url(#c247)"/><rect x="1100" y="431" width="93" height="2" fill="url(#c249)"/><rect x="1099" y="433" width="90" height="2" fill="url(#c251)"/><rect x="1099" y="435" width="85" height="2" fill="url(#c253)"/><rect x="1098" y="437" width="82" height="2" fill="url(#c255)"/><rect x="1097" y="439" width="78" height="2" fill="url(#c257)"/><rect x="1097" y="441" width="74" height="2" fill="url(#c259)"/><rect x="1096" y="443" width="71" height="2" fill="url(#c261)"/><rect x="1095" y="445" width="67" height="2" fill="url(#c263)"/><rect x="1095" y="447" width="63" height="2" fill="url(#c265)"/><rect x="1094" y="449" width="59" height="2" fill="url(#c267)"/><rect x="1093" y="451" width="56" height="2" fill="url(#c269)"/><rect x="1093" y="453" width="51" height="2" fill="url(#c271)"/><rect x="1092" y="455" width="48" height="2" fill="url(#c273)"/><rect x="1091" y="457" width="45" height="2" fill="url(#c275)"/><rect x="1091" y="459" width="40" height="2" fill="url(#c277)"/><rect x="1090" y="461" width="37" height="2" fill="url(#c279)"/><rect x="1089" y="463" width="33" height="2" fill="url(#c281)"/><rect x="1089" y="465" width="29" height="2" fill="url(#c283)"/><rect x="1088" y="467" width="25" height="2" fill="url(#c285)"/><rect x="1087" y="469" width="22" height="2" fill="url(#c287)"/><rect x="1087" y="471" width="18" height="2" fill="url(#c289)"/><rect x="1086" y="473" width="14" height="2" fill="url(#c291)"/><rect x="1085" y="475" width="11" height="2" fill="url(#c293)"/><rect x="1085" y="477" width="6" height="2" fill="url(#c295)"/></g><rect x="999" y="504" width="5" height="1" fill="#aaaaaa"/><text x="999.3" y="508.8" class="ax" text-anchor="end">0</text><rect x="1004" y="506" width="1" height="4" fill="#aaaaaa"/><text x="1004.5" y="521" class="ax" text-anchor="middle">0</text><rect x="999" y="460" width="5" height="1" fill="#aaaaaa"/><text x="999.3" y="464.8" class="ax" text-anchor="end">0,1</text><rect x="1059" y="506" width="1" height="4" fill="#aaaaaa"/><text x="1059.5" y="521" class="ax" text-anchor="middle">0,1</text><rect x="999" y="415" width="5" height="1" fill="#aaaaaa"/><text x="999.3" y="419.8" class="ax" text-anchor="end">0,2</text><rect x="1113" y="506" width="1" height="4" fill="#aaaaaa"/><text x="1113.5" y="521" class="ax" text-anchor="middle">0,2</text><rect x="999" y="370" width="5" height="1" fill="#aaaaaa"/><text x="999.3" y="374.8" class="ax" text-anchor="end">0,3</text><rect x="1168" y="506" width="1" height="4" fill="#aaaaaa"/><text x="1168.5" y="521" class="ax" text-anchor="middle">0,3</text><rect x="999" y="325" width="5" height="1" fill="#aaaaaa"/><text x="999.3" y="329.8" class="ax" text-anchor="end">0,4</text><rect x="1223" y="506" width="1" height="4" fill="#aaaaaa"/><text x="1223.5" y="521" class="ax" text-anchor="middle">0,4</text><rect x="999" y="281" width="5" height="1" fill="#aaaaaa"/><text x="999.3" y="285.8" class="ax" text-anchor="end">0,5</text><rect x="1277" y="506" width="1" height="4" fill="#aaaaaa"/><text x="1277.5" y="521" class="ax" text-anchor="middle">0,5</text><rect x="999" y="236" width="5" height="1" fill="#aaaaaa"/><text x="999.3" y="240.8" class="ax" text-anchor="end">0,6</text><rect x="1332" y="506" width="1" height="4" fill="#aaaaaa"/><text x="1332.5" y="521" class="ax" text-anchor="middle">0,6</text><rect x="999" y="191" width="5" height="1" fill="#aaaaaa"/><text x="999.3" y="195.8" class="ax" text-anchor="end">0,7</text><rect x="1386" y="506" width="1" height="4" fill="#aaaaaa"/><text x="1386.5" y="521" class="ax" text-anchor="middle">0,7</text><rect x="999" y="146" width="5" height="1" fill="#aaaaaa"/><text x="999.3" y="150.8" class="ax" text-anchor="end">0,8</text><rect x="1441" y="506" width="1" height="4" fill="#aaaaaa"/><text x="1441.5" y="521" class="ax" text-anchor="middle">0,8</text><text x="1223.5" y="124.8" class="tt" text-anchor="middle" textLength="64.5" lengthAdjust="spacingAndGlyphs">CIE 1931 xy</text><ellipse cx="1153.4" cy="221.3" rx="4.1" ry="3.4" fill="#10960e" stroke="#1a1a1a" stroke-width="1.2"/><ellipse cx="1225.6" cy="270.3" rx="4.1" ry="3.4" fill="#a8a800" stroke="#1a1a1a" stroke-width="1.2"/><ellipse cx="1117.5" cy="362.9" rx="4.1" ry="3.4" fill="#10a8a0" stroke="#1a1a1a" stroke-width="1.2"/><ellipse cx="1364.6" cy="365.3" rx="4.1" ry="3.4" fill="#e00010" stroke="#1a1a1a" stroke-width="1.2"/><ellipse cx="1167.3" cy="446.3" rx="4.1" ry="3.4" fill="#d000c8" stroke="#1a1a1a" stroke-width="1.2"/><ellipse cx="1086" cy="478.5" rx="4.1" ry="3.4" fill="#1010d0" stroke="#1a1a1a" stroke-width="1.2"/><ellipse cx="1162.2" cy="364.2" rx="4.2" ry="3.6" fill="#1a1a1a"/><ellipse cx="1163.2" cy="363.4" rx="4" ry="3.5" fill="#fff8ee" stroke="#111" stroke-width="1.4"/><rect x="1163.0" y="231.1" width="12.2" height="10" fill="none" stroke="#f4f4f4" stroke-width="1.4"/><rect x="1227.9" y="274.1" width="12.2" height="10" fill="none" stroke="#f4f4f4" stroke-width="1.4"/><rect x="1121.4" y="352.7" width="12.2" height="10" fill="none" stroke="#f4f4f4" stroke-width="1.4"/><rect x="1348.0" y="352.6" width="12.2" height="10" fill="none" stroke="#f4f4f4" stroke-width="1.4"/><rect x="1174.0" y="431.1" width="12.2" height="10" fill="none" stroke="#f4f4f4" stroke-width="1.4"/><rect x="1080.0" y="473.0" width="12.2" height="10" fill="none" stroke="#f4f4f4" stroke-width="1.4"/><rect x="1169.3" y="353.2" width="11.4" height="8.8" fill="none" stroke="#000" stroke-width="2.3"/><rect x="1192" y="473" width="263.5" height="22" fill="#393939"/><text x="1211" y="489.8" class="gam" textLength="226.5" lengthAdjust="spacingAndGlyphs">Gamut Coverage 99,9269%</text><text x="111.5" y="56.8" class="title" textLength="275" lengthAdjust="spacingAndGlyphs">Pre Calibration View</text><text x="113" y="79.8" class="goal" textLength="891.5" lengthAdjust="spacingAndGlyphs">Goal: Pre-calibration readings to document the As Found condition of the display. Press the <tspan font-style="italic">Read Series</tspan> button below to</text><text x="113" y="99" class="goal" textLength="721.5" lengthAdjust="spacingAndGlyphs">capture the pre-calibration readings. At this point, no adjustments are being made to the display.</text><text x="1090.5" y="599.3" class="peak" textLength="346.5" lengthAdjust="spacingAndGlyphs">Peak Luminance: 547 cd/m²</text></svg>
</body></html>
